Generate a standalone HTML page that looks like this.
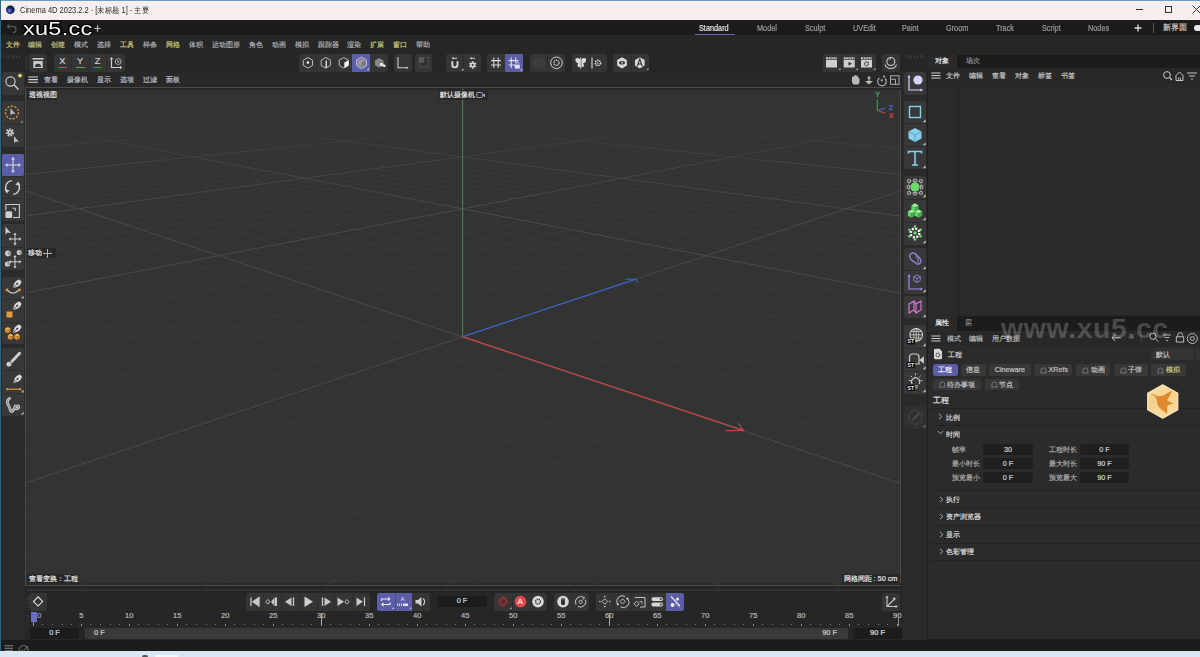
<!DOCTYPE html><html><head><meta charset="utf-8"><style>
*{margin:0;padding:0;box-sizing:border-box}
html,body{width:1200px;height:657px;overflow:hidden;background:#262626;font-family:"Liberation Sans", sans-serif}
.t{position:absolute;white-space:nowrap;line-height:1;-webkit-text-stroke:0.2px currentColor}
.a{position:absolute;overflow:visible}
</style></head><body>
<div class="a" style="left:0px;top:0px;width:1200px;height:20px;background:#f7eeee;"></div>
<div class="a" style="left:0px;top:0px;width:1200px;height:1px;background:#6f9dc6;"></div>
<div class="a" style="left:0px;top:0px;width:1px;height:657px;background:#2c6585;"></div>
<svg class="a" style="left:5px;top:4px;" width="11" height="11" viewBox="0 0 11 11"><defs><radialGradient id="c4d" cx="0.4" cy="0.6" r="0.6"><stop offset="0" stop-color="#7a86e0"/><stop offset="0.6" stop-color="#1a1f6a"/><stop offset="1" stop-color="#0b0e30"/></radialGradient></defs><circle cx="5.5" cy="5.5" r="5" fill="#e8e8f0"/><circle cx="5.3" cy="5.8" r="4.3" fill="url(#c4d)"/></svg>
<div class="t" style="left:20px;top:6.66px;font-size:8.2px;color:#2b2b2b;transform:scaleX(0.915);transform-origin:left;-webkit-text-stroke:0">Cinema 4D 2023.2.2 - [未标题 1] - 主要</div>
<div class="a" style="left:1136px;top:9px;width:7px;height:1px;background:#333;"></div>
<div class="a" style="left:1165px;top:6px;width:7px;height:7px;background:transparent;border:1px solid #333"></div>
<svg class="a" style="left:1192px;top:5px;" width="9" height="9" viewBox="0 0 9 9"><path d="M0.5 0.5L8.5 8.5M8.5 0.5L0.5 8.5" stroke="#333" stroke-width="1"/></svg>
<div class="a" style="left:1px;top:20px;width:1199px;height:15px;background:#1b1b1b;"></div>
<svg class="a" style="left:6px;top:23px;" width="11" height="9" viewBox="0 0 11 9"><path d="M2 3.5 H7 a3 3 0 0 1 0 6 " fill="none" stroke="#555" stroke-width="1.4"/><path d="M0.5 3.5 L3.5 0.8 L3.5 6.2Z" fill="#555"/></svg>
<div class="t" style="left:699px;top:24.47px;font-size:8.3px;color:#e0e0e0;transform:scaleX(0.88);transform-origin:left">Standard</div>
<div class="t" style="left:756.5px;top:24.47px;font-size:8.3px;color:#9a9a9a;transform:scaleX(0.88);transform-origin:left">Model</div>
<div class="t" style="left:804.7px;top:24.47px;font-size:8.3px;color:#9a9a9a;transform:scaleX(0.88);transform-origin:left">Sculpt</div>
<div class="t" style="left:852.6px;top:24.47px;font-size:8.3px;color:#9a9a9a;transform:scaleX(0.88);transform-origin:left">UVEdit</div>
<div class="t" style="left:902.4px;top:24.47px;font-size:8.3px;color:#9a9a9a;transform:scaleX(0.88);transform-origin:left">Paint</div>
<div class="t" style="left:946.3px;top:24.47px;font-size:8.3px;color:#9a9a9a;transform:scaleX(0.88);transform-origin:left">Groom</div>
<div class="t" style="left:996.4px;top:24.47px;font-size:8.3px;color:#9a9a9a;transform:scaleX(0.88);transform-origin:left">Track</div>
<div class="t" style="left:1041.6px;top:24.47px;font-size:8.3px;color:#9a9a9a;transform:scaleX(0.88);transform-origin:left">Script</div>
<div class="t" style="left:1087.8px;top:24.47px;font-size:8.3px;color:#9a9a9a;transform:scaleX(0.88);transform-origin:left">Nodes</div>
<div class="a" style="left:695px;top:33.6px;width:39.5px;height:2px;background:#6466b8;"></div>
<svg class="a" style="left:1134px;top:24px;" width="8" height="8" viewBox="0 0 8 8"><path d="M4 0.5V7.5M0.5 4H7.5" stroke="#ddd" stroke-width="1.3"/></svg>
<div class="a" style="left:1153px;top:23px;width:1px;height:10px;background:#555;"></div>
<div class="t" style="left:1163px;top:24.45px;font-size:7.5px;color:#d0d0d0;">新界面</div>
<div class="a" style="left:1194px;top:25px;width:10px;height:6px;background:#e8e8e8;border-radius:3px"></div>
<div class="t" style="left:22.5px;top:20.2px;font-size:18px;color:#f6f6f6;letter-spacing:0.25px;-webkit-text-stroke:0;text-shadow:1px 0 0 #000,-1px 0 0 #000,0 1px 0 #000,0 -1px 0 #000,1px 1px 0 #000,-1px -1px 0 #000,1px -1px 0 #000,-1px 1px 0 #000,0 0 2px #000;transform:scaleX(1.3);transform-origin:left">xu5.cc</div>
<svg class="a" style="left:93.5px;top:25.2px;" width="7" height="7" viewBox="0 0 7 7"><path d="M3.5 0.3V6.7M0.3 3.5H6.7" stroke="#bbb" stroke-width="1.2"/></svg>
<div class="a" style="left:1px;top:35px;width:1199px;height:17px;background:#262626;"></div>
<div class="t" style="left:5.5px;top:40.52px;font-size:7.3px;color:#c9bf6a;">文件</div>
<div class="t" style="left:28.4px;top:40.52px;font-size:7.3px;color:#b8b87a;">编辑</div>
<div class="t" style="left:51.3px;top:40.52px;font-size:7.3px;color:#b9bd78;">创建</div>
<div class="t" style="left:74.3px;top:40.52px;font-size:7.3px;color:#a8aeb8;">模式</div>
<div class="t" style="left:96.8px;top:40.52px;font-size:7.3px;color:#aeb0b4;">选择</div>
<div class="t" style="left:120px;top:40.52px;font-size:7.3px;color:#cfc575;">工具</div>
<div class="t" style="left:143px;top:40.52px;font-size:7.3px;color:#a9aaaf;">样条</div>
<div class="t" style="left:166px;top:40.52px;font-size:7.3px;color:#c9c36e;">网格</div>
<div class="t" style="left:188.8px;top:40.52px;font-size:7.3px;color:#a9aaaf;">体积</div>
<div class="t" style="left:211.8px;top:40.52px;font-size:7.3px;color:#a9aaaf;">运动图形</div>
<div class="t" style="left:249px;top:40.52px;font-size:7.3px;color:#a9aaaf;">角色</div>
<div class="t" style="left:272px;top:40.52px;font-size:7.3px;color:#a9aaaf;">动画</div>
<div class="t" style="left:295px;top:40.52px;font-size:7.3px;color:#a9aaaf;">模拟</div>
<div class="t" style="left:318px;top:40.52px;font-size:7.3px;color:#a9aaaf;">跟踪器</div>
<div class="t" style="left:347px;top:40.52px;font-size:7.3px;color:#a9aaaf;">渲染</div>
<div class="t" style="left:370px;top:40.52px;font-size:7.3px;color:#bcc46e;">扩展</div>
<div class="t" style="left:393px;top:40.52px;font-size:7.3px;color:#d2c66a;">窗口</div>
<div class="t" style="left:416px;top:40.52px;font-size:7.3px;color:#a9aaaf;">帮助</div>
<div class="a" style="left:3.0px;top:54.5px;width:1px;height:3px;background:#3d3d3d;"></div>
<div class="a" style="left:5.6px;top:54.5px;width:1px;height:3px;background:#3d3d3d;"></div>
<div class="a" style="left:8.2px;top:54.5px;width:1px;height:3px;background:#3d3d3d;"></div>
<div class="a" style="left:10.8px;top:54.5px;width:1px;height:3px;background:#3d3d3d;"></div>
<div class="a" style="left:13.4px;top:54.5px;width:1px;height:3px;background:#3d3d3d;"></div>
<div class="a" style="left:16.0px;top:54.5px;width:1px;height:3px;background:#3d3d3d;"></div>
<div class="a" style="left:18.6px;top:54.5px;width:1px;height:3px;background:#3d3d3d;"></div>
<div class="a" style="left:25px;top:57.0px;width:3px;height:1px;background:#3d3d3d;"></div>
<div class="a" style="left:25px;top:59.6px;width:3px;height:1px;background:#3d3d3d;"></div>
<div class="a" style="left:25px;top:62.2px;width:3px;height:1px;background:#3d3d3d;"></div>
<div class="a" style="left:25px;top:64.8px;width:3px;height:1px;background:#3d3d3d;"></div>
<div class="a" style="left:25px;top:67.4px;width:3px;height:1px;background:#3d3d3d;"></div>
<div class="a" style="left:29px;top:54px;width:18px;height:17.599999999999994px;background:#353535;border-radius:2.5px"></div>
<svg class="a" style="left:29px;top:54px;" width="18" height="17.6" viewBox="0 0 18 17.6"><rect x="3.5" y="4" width="11" height="1.6" fill="#c9c9c9"/><rect x="4.3" y="7" width="9.4" height="7" fill="#c9c9c9"/><path d="M6.2 12.2 a2.8 2.4 0 0 1 5.6 0Z" fill="#353535"/><rect x="6" y="11.6" width="6" height="1.3" fill="#353535"/></svg>
<div class="a" style="left:54px;top:54px;width:71px;height:17.599999999999994px;background:#353535;border-radius:2.5px"></div>
<div class="a" style="left:70.7px;top:54px;width:1px;height:17.6px;background:#2c2c2c;"></div>
<div class="a" style="left:88.7px;top:54px;width:1px;height:17.6px;background:#2c2c2c;"></div>
<div class="a" style="left:106px;top:54px;width:1px;height:17.6px;background:#2c2c2c;"></div>
<div class="t" style="left:62.3px;top:57.01px;font-size:9.2px;color:#d2d2d2;transform:translateX(-50%);">X</div>
<div class="a" style="left:57.8px;top:67px;width:9px;height:1.3px;background:#d04a4a;"></div>
<div class="t" style="left:80px;top:57.01px;font-size:9.2px;color:#d2d2d2;transform:translateX(-50%);">Y</div>
<div class="a" style="left:75.5px;top:67px;width:9px;height:1.3px;background:#4ab24a;"></div>
<div class="t" style="left:97.5px;top:57.01px;font-size:9.2px;color:#d2d2d2;transform:translateX(-50%);">Z</div>
<div class="a" style="left:93.0px;top:67px;width:9px;height:1.3px;background:#3a7bd0;"></div>
<svg class="a" style="left:110px;top:54px;" width="15" height="16" viewBox="0 0 15 16"><path d="M1.5 4.5 V13.5 H10.5" fill="none" stroke="#cfcfcf" stroke-width="1.1"/><path d="M-0.2 5.2 L1.5 3 L3.2 5.2Z M10 11.8 L12.2 13.5 L10 15.2Z" fill="#cfcfcf"/><path d="M5.5 6 l2.7 -1.55 l2.7 1.55 v3.1 l-2.7 1.55 l-2.7 -1.55z M7 6.8 l1.2 0.7 l1.2 -0.7 M8.2 7.5 v1.5" fill="none" stroke="#c8c8c8" stroke-width="0.8"/></svg>
<div class="a" style="left:299px;top:54px;width:89px;height:17.599999999999994px;background:#353535;border-radius:2.5px"></div>
<div class="a" style="left:352.3px;top:54px;width:17.8px;height:17.6px;background:#5b5ea6;"></div>
<div class="a" style="left:316.3px;top:54px;width:1px;height:17.6px;background:#2c2c2c;"></div>
<div class="a" style="left:334.3px;top:54px;width:1px;height:17.6px;background:#2c2c2c;"></div>
<svg class="a" style="left:299px;top:54px;" width="89" height="17.6" viewBox="0 0 89 17.6"><polygon points="8.90,3.50 13.49,6.15 13.49,11.45 8.90,14.10 4.31,11.45 4.31,6.15" fill="none" stroke="#c8c8c8" stroke-width="0.9"/><circle cx="8.9" cy="8.6" r="1.3" fill="#eee"/><polygon points="26.80,3.50 31.39,6.15 31.39,11.45 26.80,14.10 22.21,11.45 22.21,6.15" fill="none" stroke="#c8c8c8" stroke-width="0.9"/><path d="M27.2 6.5V14" stroke="#eee" stroke-width="1.3"/><polygon points="44.80,3.50 49.39,6.15 49.39,11.45 44.80,14.10 40.21,11.45 40.21,6.15" fill="none" stroke="#c8c8c8" stroke-width="0.9"/><path d="M45.3 8.4 L49.6 6.2 L49.6 11.4 L45.3 13.9Z" fill="#f0f0f0"/><polygon points="62.50,3.20 67.35,6.00 67.35,11.60 62.50,14.40 57.65,11.60 57.65,6.00" fill="none" stroke="#e0e0e0" stroke-width="0.9"/><polygon points="62.50,4.60 66.14,6.70 66.14,10.90 62.50,13.00 58.86,10.90 58.86,6.70" fill="#9a9a9a"/><path d="M62.5 8.8 L66.1 6.7 L66.1 10.9 L62.5 13Z" fill="#777"/><path d="M67.8 16 L70 16 L70 13.8Z" fill="#bbb"/><polygon points="80.20,4.00 84.36,6.40 84.36,11.20 80.20,13.60 76.04,11.20 76.04,6.40" fill="#8a8a8a"/><path d="M80.5 9 L85 6.6 V11 L80.5 13.6Z" fill="#6a6a6a"/><circle cx="82.6" cy="10.6" r="1.8" fill="#eee"/><circle cx="85.2" cy="11.8" r="1.4" fill="#eee"/></svg>
<div class="a" style="left:394.3px;top:54px;width:17.69999999999999px;height:17.599999999999994px;background:#353535;border-radius:2.5px"></div>
<svg class="a" style="left:394.3px;top:54px;" width="18" height="17.6" viewBox="0 0 18 17.6"><path d="M4 3 V13.8 H14" fill="none" stroke="#cfcfcf" stroke-width="1.1"/><path d="M12.5 12.5 L14.5 13.8 L12.5 15" fill="#cfcfcf"/></svg>
<div class="a" style="left:415px;top:54px;width:17.30000000000001px;height:17.599999999999994px;background:#353535;border-radius:2.5px"></div>
<svg class="a" style="left:415px;top:54px;" width="17.3" height="17.6" viewBox="0 0 17.3 17.6"><rect x="4" y="3.5" width="9.5" height="9.5" fill="none" stroke="#505050" stroke-width="0.9"/><rect x="4" y="3.5" width="5" height="5" fill="#5a5a5a"/></svg>
<div class="a" style="left:445.5px;top:54px;width:35.19999999999999px;height:17.599999999999994px;background:#353535;border-radius:2.5px"></div>
<div class="a" style="left:463px;top:54px;width:1px;height:17.6px;background:#2c2c2c;"></div>
<svg class="a" style="left:445.5px;top:54px;" width="35.2" height="17.6" viewBox="0 0 35.2 17.6"><path d="M6.3 7.2 V10.8 a2.6 2.6 0 0 0 5.2 0 V7.2" fill="none" stroke="#d8d8d8" stroke-width="1.9"/><path d="M6.5 4.3 H11.2" stroke="#d8d8d8" stroke-width="0.9"/><path d="M5.6 4.3 L7.6 3 V5.6Z" fill="#d8d8d8"/><path d="M15.2 16.5 L17.5 16.5 L17.5 14.2Z" fill="#bbb"/><path d="M24.5 4.3 H29.2" stroke="#d8d8d8" stroke-width="0.9"/><path d="M23.6 4.3 L25.6 3 V5.6Z" fill="#d8d8d8"/><circle cx="26.7" cy="11" r="2.4" fill="#d8d8d8"/><rect x="25.80" y="7.30" width="1.8" height="2" fill="#d8d8d8" transform="rotate(0 26.7 11)"/><rect x="25.80" y="7.30" width="1.8" height="2" fill="#d8d8d8" transform="rotate(60 26.7 11)"/><rect x="25.80" y="7.30" width="1.8" height="2" fill="#d8d8d8" transform="rotate(120 26.7 11)"/><rect x="25.80" y="7.30" width="1.8" height="2" fill="#d8d8d8" transform="rotate(180 26.7 11)"/><rect x="25.80" y="7.30" width="1.8" height="2" fill="#d8d8d8" transform="rotate(240 26.7 11)"/><rect x="25.80" y="7.30" width="1.8" height="2" fill="#d8d8d8" transform="rotate(300 26.7 11)"/><circle cx="26.7" cy="11" r="1.01" fill="#353535"/></svg>
<div class="a" style="left:487.3px;top:54px;width:35.19999999999999px;height:17.599999999999994px;background:#353535;border-radius:2.5px"></div>
<div class="a" style="left:505px;top:54px;width:17.5px;height:17.6px;background:#5b5ea6;"></div>
<svg class="a" style="left:487.3px;top:54px;" width="35.2" height="17.6" viewBox="0 0 35.2 17.6"><path d="M4 6.6 H14 M4 11 H14 M6.8 3.6 V14 M11.2 3.6 V14" stroke="#d8d8d8" stroke-width="1.1"/><path d="M21.5 6.6 H31.5 M21.5 11 H28 M24.3 3.6 V14 M28.7 3.6 V8.5" stroke="#e0e0e8" stroke-width="1.1"/><rect x="27.8" y="10.8" width="5" height="3.8" fill="#e0e0e8"/><path d="M28.9 10.8 V9.6 a1.4 1.4 0 0 1 2.8 0 V10.8" fill="none" stroke="#e0e0e8" stroke-width="0.8"/><path d="M33 16.5 L35.2 16.5 L35.2 14.3Z" fill="#ccc"/></svg>
<div class="a" style="left:529.5px;top:54px;width:35.5px;height:17.599999999999994px;background:#353535;border-radius:2.5px"></div>
<div class="a" style="left:547px;top:54px;width:1px;height:17.6px;background:#2c2c2c;"></div>
<svg class="a" style="left:529.5px;top:54px;" width="35.5" height="17.6" viewBox="0 0 35.5 17.6"><circle cx="8.8" cy="8.8" r="5.5" fill="none" stroke="#4a4a4a" stroke-width="0.8"/><circle cx="8.8" cy="8.8" r="3.6" fill="none" stroke="#4a4a4a" stroke-width="0.8"/><circle cx="8.8" cy="8.8" r="1.6" fill="none" stroke="#4a4a4a" stroke-width="0.8"/><circle cx="26.5" cy="8.8" r="5.8" fill="none" stroke="#cfcfcf" stroke-width="1"/><circle cx="26.5" cy="8.8" r="2.6" fill="none" stroke="#cfcfcf" stroke-width="1.3" stroke-dasharray="1.2 0.7"/></svg>
<div class="a" style="left:571.6px;top:54px;width:35.19999999999993px;height:17.599999999999994px;background:#353535;border-radius:2.5px"></div>
<div class="a" style="left:589px;top:54px;width:1px;height:17.6px;background:#2c2c2c;"></div>
<svg class="a" style="left:571.6px;top:54px;" width="35.2" height="17.6" viewBox="0 0 35.2 17.6"><path d="M8.7 3.5 V14.5" stroke="#ddd" stroke-width="1"/><path d="M8 5 C5 3 3 4 3.5 7 C4 9 6 9 6.5 9.5 C5 11 5 13 8 13Z" fill="#ddd"/><path d="M9.5 5 C12.5 3 14.5 4 14 7 C13.5 9 11.5 9 11 9.5 C12.5 11 12.5 13 9.5 13Z" fill="#ddd"/><path d="M20 3.5 V14.5" stroke="#ddd" stroke-width="1.1"/><circle cx="26" cy="9" r="2.6" fill="none" stroke="#ddd" stroke-width="1.6" stroke-dasharray="1.4 0.8"/><circle cx="26" cy="9" r="0.8" fill="#ddd"/></svg>
<div class="a" style="left:613.3px;top:54px;width:35.700000000000045px;height:17.599999999999994px;background:#353535;border-radius:2.5px"></div>
<div class="a" style="left:631px;top:54px;width:1px;height:17.6px;background:#2c2c2c;"></div>
<svg class="a" style="left:613.3px;top:54px;" width="35.7" height="17.6" viewBox="0 0 35.7 17.6"><polygon points="9.00,3.20 13.85,6.00 13.85,11.60 9.00,14.40 4.15,11.60 4.15,6.00" fill="#d8d8d8"/><ellipse cx="9" cy="8.8" rx="3" ry="1.8" fill="#333"/><circle cx="9" cy="8.8" r="0.9" fill="#d8d8d8"/><polygon points="26.80,3.20 31.65,6.00 31.65,11.60 26.80,14.40 21.95,11.60 21.95,6.00" fill="#d8d8d8"/><path d="M24.3 12.3 L26.8 5 L29.3 12.3 M25.2 10 H28.4" fill="none" stroke="#333" stroke-width="1.1"/><path d="M33.5 16 L35.5 16 L35.5 14Z" fill="#bbb"/></svg>
<div class="a" style="left:823px;top:54px;width:53px;height:17.599999999999994px;background:#353535;border-radius:2.5px"></div>
<div class="a" style="left:840.7px;top:54px;width:1px;height:17.6px;background:#2c2c2c;"></div>
<div class="a" style="left:858px;top:54px;width:1px;height:17.6px;background:#2c2c2c;"></div>
<svg class="a" style="left:823px;top:54px;" width="53" height="17.6" viewBox="0 0 53 17.6"><rect x="3" y="6" width="11" height="7.5" fill="#cfcfcf"/><path d="M3 5.3 h11 v-2 h-11z" fill="#cfcfcf"/><path d="M5 3.3 l1 2 M7.5 3.3 l1 2 M10 3.3 l1 2 M12.5 3.3 l1 2" stroke="#353535" stroke-width="0.8"/><path d="M15.5 16 L17.5 16 L17.5 14Z" fill="#bbb"/><rect x="20.7" y="6" width="11" height="7.5" fill="#cfcfcf"/><path d="M20.7 5.3 h11 v-2 h-11z" fill="#cfcfcf"/><path d="M22.7 3.3 l1 2 M25.2 3.3 l1 2 M27.7 3.3 l1 2 M30.2 3.3 l1 2" stroke="#353535" stroke-width="0.8"/><path d="M25.5 7.8 L29 9.8 L25.5 11.8Z" fill="#353535"/><path d="M33 16 L35 16 L35 14Z" fill="#bbb"/><rect x="38" y="6" width="11" height="7.5" fill="#cfcfcf"/><path d="M38 5.3 h11 v-2 h-11z" fill="#cfcfcf"/><path d="M40 3.3 l1 2 M42.5 3.3 l1 2 M45 3.3 l1 2 M47.5 3.3 l1 2" stroke="#353535" stroke-width="0.8"/><circle cx="43.5" cy="9.8" r="1.9" fill="none" stroke="#353535" stroke-width="1.3" stroke-dasharray="1.2 0.6"/><path d="M50.5 16 L52.5 16 L52.5 14Z" fill="#bbb"/></svg>
<div class="a" style="left:882.4px;top:54px;width:17.600000000000023px;height:17.599999999999994px;background:#353535;border-radius:2.5px"></div>
<svg class="a" style="left:882.4px;top:54px;" width="17.6" height="17.6" viewBox="0 0 17.6 17.6"><circle cx="8.8" cy="7.5" r="4" fill="none" stroke="#cfcfcf" stroke-width="1.1"/><path d="M7 6 a2 2 0 0 1 2 -1.5" fill="none" stroke="#cfcfcf" stroke-width="0.8"/><path d="M3.3 10.5 a5.5 4 0 0 0 11 0" fill="none" stroke="#cfcfcf" stroke-width="1.1"/></svg>
<div class="a" style="left:906.0px;top:55px;width:1px;height:2.5px;background:#3d3d3d;"></div>
<div class="a" style="left:908.7px;top:55px;width:1px;height:2.5px;background:#3d3d3d;"></div>
<div class="a" style="left:911.4px;top:55px;width:1px;height:2.5px;background:#3d3d3d;"></div>
<div class="a" style="left:914.1px;top:55px;width:1px;height:2.5px;background:#3d3d3d;"></div>
<div class="a" style="left:916.8px;top:55px;width:1px;height:2.5px;background:#3d3d3d;"></div>
<div class="a" style="left:919.5px;top:55px;width:1px;height:2.5px;background:#3d3d3d;"></div>
<div class="a" style="left:922.2px;top:55px;width:1px;height:2.5px;background:#3d3d3d;"></div>
<div class="a" style="left:1px;top:72px;width:23.5px;height:568px;background:#2a2a2a;"></div>
<div class="a" style="left:1.5px;top:72px;width:22px;height:23px;background:#383838;border-radius:2.5px"></div>
<div class="a" style="left:1.5px;top:101px;width:22px;height:45.80000000000001px;background:#383838;border-radius:2.5px"></div>
<div class="a" style="left:1.5px;top:154px;width:22px;height:67px;background:#383838;border-radius:2.5px"></div>
<div class="a" style="left:1.5px;top:154.0px;width:22px;height:22.333333333333332px;background:#5b5ea6;border-radius:2px"></div>
<div class="a" style="left:1.5px;top:224.2px;width:22px;height:45.80000000000001px;background:#383838;border-radius:2.5px"></div>
<div class="a" style="left:1.5px;top:276.7px;width:22px;height:67.80000000000001px;background:#383838;border-radius:2.5px"></div>
<div class="a" style="left:1.5px;top:348px;width:22px;height:68px;background:#383838;border-radius:2.5px"></div>
<div class="a" style="left:1.5px;top:123.5px;width:22px;height:1px;background:#2e2e2e;"></div>
<div class="a" style="left:1.5px;top:175.5px;width:22px;height:1px;background:#2e2e2e;"></div>
<div class="a" style="left:1.5px;top:198.0px;width:22px;height:1px;background:#2e2e2e;"></div>
<div class="a" style="left:1.5px;top:246.5px;width:22px;height:1px;background:#2e2e2e;"></div>
<div class="a" style="left:1.5px;top:298.8px;width:22px;height:1px;background:#2e2e2e;"></div>
<div class="a" style="left:1.5px;top:321.5px;width:22px;height:1px;background:#2e2e2e;"></div>
<div class="a" style="left:1.5px;top:370.1px;width:22px;height:1px;background:#2e2e2e;"></div>
<div class="a" style="left:1.5px;top:392.7px;width:22px;height:1px;background:#2e2e2e;"></div>
<svg class="a" style="left:1.5px;top:72px;" width="22" height="23" viewBox="0 0 22 23"><circle cx="8.5" cy="9.5" r="4.6" fill="none" stroke="#cfcfcf" stroke-width="1.1"/><path d="M11.8 12.8 L16.5 17.5" stroke="#cfcfcf" stroke-width="1.4"/><circle cx="18" cy="3.6" r="1.9" fill="#d9d872"/></svg>
<svg class="a" style="left:1.5px;top:101px;" width="22" height="23" viewBox="0 0 22 23"><circle cx="10" cy="11.5" r="6.5" fill="none" stroke="#e09a3a" stroke-width="1.3" stroke-dasharray="2.1 1.5"/><path d="M8.5 7 L8.5 14.5 L10.3 12.7 L13.5 13Z" fill="#bdbdbd"/><path d="M18.5 21.5 L20.5 21.5 L20.5 19.5Z" fill="#bbb"/></svg>
<svg class="a" style="left:1.5px;top:124px;" width="22" height="23" viewBox="0 0 22 23"><circle cx="8" cy="8.5" r="2.9" fill="none" stroke="#cfcfcf" stroke-width="2.4" stroke-dasharray="1.6 0.9"/><circle cx="8" cy="8.5" r="2.3" fill="#cfcfcf"/><circle cx="8" cy="8.5" r="0.9" fill="#383838"/><path d="M12 12 L12 19 L13.8 17.5 L17 18Z" fill="#bdbdbd"/></svg>
<svg class="a" style="left:1.5px;top:154px;" width="22" height="21.4" viewBox="0 0 22 21.4"><path d="M11 4.5 V17.5 M4.5 11 H17.5" stroke="#d8d8e8" stroke-width="1.1"/><path d="M11 3 L9 5.5 H13Z M11 19 L9 16.5 H13Z M3 11 L5.5 9 V13Z M19 11 L16.5 9 V13Z" fill="#d8d8e8"/></svg>
<svg class="a" style="left:1.5px;top:176px;" width="22" height="22" viewBox="0 0 22 22"><path d="M9.8 4.6 A7 7 0 0 0 4.6 15.2" fill="none" stroke="#cfcfcf" stroke-width="1.3"/><path d="M11.2 18.4 A7 7 0 0 0 16.4 7.8" fill="none" stroke="#cfcfcf" stroke-width="1.3"/><path d="M2.5 13.2 L4.8 17.6 L7.6 14.2Z" fill="#cfcfcf"/><path d="M18.5 9.8 L16.2 5.4 L13.4 8.8Z" fill="#cfcfcf"/></svg>
<svg class="a" style="left:1.5px;top:198.5px;" width="22" height="22.5" viewBox="0 0 22 22.5"><path d="M3.9 11.5 V5.5 H17.4 V18.5 H11" fill="none" stroke="#cfcfcf" stroke-width="1.1"/><path d="M10.5 9.2 H13.3 V12" fill="none" stroke="#cfcfcf" stroke-width="1"/><rect x="3.4" y="12.2" width="6.8" height="6.8" rx="1.5" fill="#cfcfcf"/></svg>
<svg class="a" style="left:1.5px;top:224.2px;" width="22" height="23" viewBox="0 0 22 23"><path d="M3.5 2.8 V10.5 L5.5 8.6 L9 9.3Z" fill="#cfcfcf"/><path d="M13 10 V20 M8 15 H18" stroke="#cfcfcf" stroke-width="1"/><path d="M13 8.6 L11.3 10.8 H14.7Z M13 21.4 L11.3 19.2 H14.7Z M6.6 15 L8.8 13.3 V16.7Z M19.4 15 L17.2 13.3 V16.7Z" fill="#cfcfcf"/></svg>
<svg class="a" style="left:1.5px;top:247px;" width="22" height="23" viewBox="0 0 22 23"><circle cx="6" cy="6.5" r="2.9" fill="#cfcfcf"/><circle cx="7.30" cy="6.21" r="1.80" fill="#9a9a9a"/><circle cx="17.2" cy="5.6" r="2.5" fill="#cfcfcf"/><circle cx="18.32" cy="5.35" r="1.55" fill="#9a9a9a"/><circle cx="5.5" cy="17" r="2.6" fill="#cfcfcf"/><circle cx="6.67" cy="16.74" r="1.61" fill="#9a9a9a"/><path d="M13 9.5 V20 M8 14.8 H18" stroke="#cfcfcf" stroke-width="1"/><path d="M13 8.1 L11.3 10.3 H14.7Z M13 21.4 L11.3 19.2 H14.7Z M6.6 14.8 L8.8 13.1 V16.5Z M19.4 14.8 L17.2 13.1 V16.5Z" fill="#cfcfcf"/></svg>
<svg class="a" style="left:1.5px;top:276.7px;" width="22" height="22.6" viewBox="0 0 22 22.6"><g transform="translate(10.5 2.2) scale(0.9)"><path d="M0.3 10 L1.8 5 C2.8 2.6 5 1 7.8 0.4 L10 2.6 C9.4 5.4 7.8 7.4 5.2 8.4Z" fill="#d8d8d8"/><path d="M0.3 10 L4.6 5.7" stroke="#383838" stroke-width="0.9"/><circle cx="5.2" cy="5.1" r="1.1" fill="#383838"/></g><path d="M5 13 Q11 19 17 13" fill="none" stroke="#ccc" stroke-width="1.2"/><circle cx="5" cy="13" r="1.4" fill="#e09a3a"/><circle cx="17.5" cy="13" r="1.4" fill="#e09a3a"/><path d="M18.8 21.5 L21.6 21.5 L21.6 18.7Z" fill="#bbb"/></svg>
<svg class="a" style="left:1.5px;top:299.3px;" width="22" height="22.6" viewBox="0 0 22 22.6"><g transform="translate(10.5 2.2) scale(0.9)"><path d="M0.3 10 L1.8 5 C2.8 2.6 5 1 7.8 0.4 L10 2.6 C9.4 5.4 7.8 7.4 5.2 8.4Z" fill="#d8d8d8"/><path d="M0.3 10 L4.6 5.7" stroke="#383838" stroke-width="0.9"/><circle cx="5.2" cy="5.1" r="1.1" fill="#383838"/></g><rect x="4.5" y="12.5" width="6" height="6" fill="#e09a3a"/></svg>
<svg class="a" style="left:1.5px;top:322px;" width="22" height="22.5" viewBox="0 0 22 22.5"><g transform="translate(10.5 2.2) scale(0.9)"><path d="M0.3 10 L1.8 5 C2.8 2.6 5 1 7.8 0.4 L10 2.6 C9.4 5.4 7.8 7.4 5.2 8.4Z" fill="#d8d8d8"/><path d="M0.3 10 L4.6 5.7" stroke="#383838" stroke-width="0.9"/><circle cx="5.2" cy="5.1" r="1.1" fill="#383838"/></g><path d="M5.8 4.95 L8.6 6.58 L5.8 8.2 L3.0 6.58Z" fill="#f2b25a"/><path d="M3.0 6.58 L5.8 8.2 L5.8 11.45 L3.0 9.82Z" fill="#e39a38"/><path d="M8.6 6.58 L5.8 8.2 L5.8 11.45 L8.6 9.82Z" fill="#c77f25"/><path d="M8.6 11.55 L11.399999999999999 13.18 L8.6 14.8 L5.8 13.18Z" fill="#f2b25a"/><path d="M5.8 13.18 L8.6 14.8 L8.6 18.05 L5.8 16.42Z" fill="#e39a38"/><path d="M11.399999999999999 13.18 L8.6 14.8 L8.6 18.05 L11.399999999999999 16.42Z" fill="#c77f25"/><path d="M15.2 11.55 L18.0 13.18 L15.2 14.8 L12.399999999999999 13.18Z" fill="#f2b25a"/><path d="M12.399999999999999 13.18 L15.2 14.8 L15.2 18.05 L12.399999999999999 16.42Z" fill="#e39a38"/><path d="M18.0 13.18 L15.2 14.8 L15.2 18.05 L18.0 16.42Z" fill="#c77f25"/></svg>
<svg class="a" style="left:1.5px;top:348px;" width="22" height="22.6" viewBox="0 0 22 22.6"><path d="M9.8 13.6 L17.6 5.2" stroke="#cfcfcf" stroke-width="2.9" stroke-linecap="round"/><circle cx="6.9" cy="16.2" r="2.5" fill="#cfcfcf"/><path d="M8.3 14.8 L9.6 13.4" stroke="#383838" stroke-width="0.6"/></svg>
<svg class="a" style="left:1.5px;top:370.6px;" width="22" height="22.6" viewBox="0 0 22 22.6"><g transform="translate(11.0 3.2) scale(0.9)"><path d="M0.3 10 L1.8 5 C2.8 2.6 5 1 7.8 0.4 L10 2.6 C9.4 5.4 7.8 7.4 5.2 8.4Z" fill="#d8d8d8"/><path d="M0.3 10 L4.6 5.7" stroke="#383838" stroke-width="0.9"/><circle cx="5.2" cy="5.1" r="1.1" fill="#383838"/></g><path d="M5 18.2 H18.5" stroke="#e09a3a" stroke-width="1.2"/><rect x="4.3" y="17.2" width="1.6" height="2" fill="#e09a3a"/><rect x="17.6" y="17.2" width="1.6" height="2" fill="#e09a3a"/><path d="M18.8 21.5 L21.6 21.5 L21.6 18.7Z" fill="#bbb"/></svg>
<svg class="a" style="left:1.5px;top:393.2px;" width="22" height="22.8" viewBox="0 0 22 22.8"><path d="M7.5 5.5 C5 7 4.5 10 6.5 12.5 C7.5 14 8 16 8.5 17.5 C9 19 11 18.5 11.5 17 C12 15 13 13.5 15 13 C17 12.5 17.5 14.5 15.5 15.5 C13.5 16.5 12.5 15 13 13" fill="none" stroke="#cfcfcf" stroke-width="2.8" stroke-linecap="round" stroke-linejoin="round"/><path d="M7.5 5.5 C5 7 4.5 10 6.5 12.5 C7.5 14 8 16 8.5 17.5 C9 19 11 18.5 11.5 17 C12 15 13 13.5 15 13 C17 12.5 17.5 14.5 15.5 15.5 C13.5 16.5 12.5 15 13 13" fill="none" stroke="#5a5a5a" stroke-width="0.7" stroke-linecap="round"/><path d="M18.8 21.5 L21.6 21.5 L21.6 18.7Z" fill="#bbb"/></svg>
<div class="a" style="left:24.5px;top:72px;width:877px;height:15.5px;background:#282828;"></div>
<svg class="a" style="left:28px;top:76.3px;" width="11" height="7" viewBox="0 0 11 7"><path d="M0.3 1 H10 M0.3 3.6 H10 M0.3 6.2 H10" stroke="#d8d8d8" stroke-width="1.1"/></svg>
<div class="t" style="left:44px;top:76.21px;font-size:7.2px;color:#b8bcc2;">查看</div>
<div class="t" style="left:67px;top:76.21px;font-size:7.2px;color:#b8bcc2;">摄像机</div>
<div class="t" style="left:97px;top:76.21px;font-size:7.2px;color:#b8bcc2;">显示</div>
<div class="t" style="left:120px;top:76.21px;font-size:7.2px;color:#b8bcc2;">选项</div>
<div class="t" style="left:143px;top:76.21px;font-size:7.2px;color:#b8bcc2;">过滤</div>
<div class="t" style="left:166px;top:76.21px;font-size:7.2px;color:#b8bcc2;">面板</div>
<svg class="a" style="left:850px;top:74px;" width="50" height="12" viewBox="0 0 50 12"><path d="M3.5 10.5 C2 9 1.6 7 2 5.5 V3.5 a0.75 0.75 0 0 1 1.5 0 V5.5 V2.3 a0.75 0.75 0 0 1 1.5 0 V5.5 V1.8 a0.75 0.75 0 0 1 1.5 0 V5.5 V2.5 a0.75 0.75 0 0 1 1.5 0 V5.5 V4.5 a0.75 0.75 0 0 1 1.5 0 V7.5 C9.5 9.5 8.5 10.6 7 10.6 Z" fill="#b8b8b8"/><path d="M19 2.8 V7.5" stroke="#b8b8b8" stroke-width="1.3"/><path d="M17 4.5 L19 2 L21 4.5Z" fill="#b8b8b8"/><path d="M15 7 H23 L19 10.5Z" fill="#b8b8b8"/><path d="M29.5 4 A4.3 4.3 0 1 0 34.8 4.3" fill="none" stroke="#b8b8b8" stroke-width="1.1"/><circle cx="31.8" cy="6.3" r="1.1" fill="#b8b8b8"/><circle cx="34" cy="2.6" r="1" fill="#b8b8b8"/><rect x="40.5" y="1.8" width="8.5" height="8.5" fill="none" stroke="#b8b8b8" stroke-width="0.9"/><path d="M40.5 5.2 H45.5 V10.3" fill="none" stroke="#b8b8b8" stroke-width="0.9"/></svg>
<div class="a" style="left:25px;top:87px;width:876px;height:499px;background:#4a4a4a;"></div>
<div class="a" style="left:26px;top:88px;width:874px;height:497px;background:#333333;"></div>
<div class="a" style="left:26px;top:88px;width:874.5px;height:2.3px;background:#272727;"></div>
<div class="a" style="left:26px;top:582.6px;width:874.5px;height:2.4px;background:#2a2a2a;"></div>
<svg class="a" style="left:26px;top:88.3px;overflow:hidden" width="874" height="497" viewBox="0 0 874 497"><defs><linearGradient id="fmi" x1="0" y1="0" x2="0" y2="1" gradientUnits="objectBoundingBox"><stop offset="0" stop-color="#000"/><stop offset="0.055" stop-color="#000"/><stop offset="0.11" stop-color="#666"/><stop offset="0.2" stop-color="#ddd"/><stop offset="0.3" stop-color="#fff"/><stop offset="1" stop-color="#fff"/></linearGradient><linearGradient id="fma" x1="0" y1="0" x2="0" y2="1" gradientUnits="objectBoundingBox"><stop offset="0" stop-color="#000"/><stop offset="0.055" stop-color="#000"/><stop offset="0.085" stop-color="#333"/><stop offset="0.15" stop-color="#bbb"/><stop offset="0.25" stop-color="#fff"/><stop offset="1" stop-color="#fff"/></linearGradient><mask id="mmi"><rect x="0" y="0" width="874" height="497" fill="url(#fmi)"/></mask><mask id="mma"><rect x="0" y="0" width="874" height="497" fill="url(#fma)"/></mask><clipPath id="vclip"><rect x="0" y="0" width="874" height="497"/></clipPath></defs><g clip-path="url(#vclip)"><path mask="url(#mmi)" d="M-5293.3 237.3L-45953.8 2688.0M-5729.2 259.4L441.2 -13.6M-5066.8 227.4L-45350.6 2688.0M-5937.4 271.8L445.6 -13.5M-4855.3 218.1L-44747.5 2688.0M-6162.7 285.2L450.1 -13.3M-4657.3 209.4L-44144.3 2688.0M-6407.3 299.7L454.6 -13.1M-4471.6 201.3L-43541.1 2688.0M-6674.0 315.6L459.2 -12.9M-4297.0 193.6L-42938.0 2688.0M-6965.7 333.0L463.8 -12.7M-4132.6 186.4L-42334.8 2688.0M-7286.2 352.0L468.5 -12.5M-3977.5 179.6L-41731.7 2688.0M-7639.9 373.1L473.2 -12.2M-3831.0 173.2L-41128.5 2688.0M-8032.3 396.4L477.9 -12.0M-3560.8 161.4L-39922.2 2688.0M-8961.9 451.7L487.6 -11.6M-3436.1 155.9L-39319.0 2688.0M-9518.0 484.8L492.5 -11.4M-3317.5 150.7L-38715.9 2688.0M-10151.9 522.5L497.4 -11.2M-3204.7 145.7L-38112.7 2688.0M-10881.4 565.9L502.4 -11.0M-3097.2 141.0L-37509.5 2688.0M-11729.8 616.3L507.5 -10.7M-2994.6 136.5L-36906.4 2688.0M-12728.6 675.8L512.6 -10.5M-2896.7 132.2L-36303.2 2688.0M-13921.9 746.7L517.7 -10.3M-2803.1 128.1L-35700.1 2688.0M-15372.5 833.0L523.0 -10.1M-2713.6 124.2L-35096.9 2688.0M-17173.7 940.2L528.2 -9.8M-2545.7 116.9L-33890.6 2688.0M-22498.5 1256.9L538.9 -9.4M-2466.8 113.4L-33287.4 2688.0M-26675.1 1505.4L544.4 -9.1M-2391.1 110.1L-32684.3 2688.0M-32805.9 1870.1L549.9 -8.9M-2318.3 106.9L-32081.1 2688.0M-42681.1 2457.5L555.4 -8.6M-2248.3 103.8L-31477.9 2688.0M-46119.4 2688.0L561.1 -8.4M-2180.9 100.9L-30874.8 2688.0M-45515.6 2688.0L566.7 -8.1M-2116.0 98.0L-30271.6 2688.0M-44911.8 2688.0L572.5 -7.9M-2053.5 95.3L-29668.4 2688.0M-44307.9 2688.0L578.3 -7.6M-1993.2 92.7L-29065.3 2688.0M-43704.1 2688.0L584.2 -7.4M-1878.7 87.6L-27859.0 2688.0M-42496.5 2688.0L596.1 -6.9M-1824.4 85.3L-27255.8 2688.0M-41892.6 2688.0L602.2 -6.6M-1771.9 83.0L-26652.6 2688.0M-41288.8 2688.0L608.4 -6.3M-1721.1 80.7L-26049.5 2688.0M-40685.0 2688.0L614.6 -6.0M-1671.9 78.6L-25446.3 2688.0M-40081.2 2688.0L620.9 -5.8M-1624.3 76.5L-24843.2 2688.0M-39477.3 2688.0L627.2 -5.5M-1578.1 74.5L-24240.0 2688.0M-38873.5 2688.0L633.7 -5.2M-1533.4 72.5L-23636.8 2688.0M-38269.7 2688.0L640.2 -4.9M-1490.0 70.6L-23033.7 2688.0M-37665.9 2688.0L646.8 -4.6M-1407.1 67.0L-21827.4 2688.0M-36458.2 2688.0L660.2 -4.0M-1367.4 65.2L-21224.2 2688.0M-35854.4 2688.0L667.0 -3.7M-1328.8 63.5L-20621.0 2688.0M-35250.6 2688.0L674.0 -3.4M-1291.4 61.9L-20017.9 2688.0M-34646.7 2688.0L681.0 -3.1M-1254.9 60.3L-19414.7 2688.0M-34042.9 2688.0L688.1 -2.8M-1219.5 58.7L-18811.6 2688.0M-33439.1 2688.0L695.2 -2.5M-1185.0 57.2L-18208.4 2688.0M-32835.3 2688.0L702.5 -2.2M-1151.4 55.8L-17605.2 2688.0M-32231.4 2688.0L709.9 -1.9M-1118.8 54.3L-17002.1 2688.0M-31627.6 2688.0L717.3 -1.5M-1055.9 51.6L-15795.8 2688.0M-30420.0 2688.0L732.5 -0.9M-1025.6 50.2L-15192.6 2688.0M-29816.1 2688.0L740.3 -0.5M-996.1 49.0L-14589.4 2688.0M-29212.3 2688.0L748.1 -0.2M-967.4 47.7L-13986.3 2688.0M-28608.5 2688.0L756.0 0.2M-939.3 46.5L-13383.1 2688.0M-28004.7 2688.0L764.1 0.5M-911.9 45.3L-12780.0 2688.0M-27400.8 2688.0L772.2 0.9M-885.2 44.1L-12176.8 2688.0M-26797.0 2688.0L780.5 1.2M-859.0 42.9L-11573.6 2688.0M-26193.2 2688.0L788.9 1.6M-833.5 41.8L-10970.5 2688.0M-25589.4 2688.0L797.4 2.0M-784.2 39.7L-9764.2 2688.0M-24381.7 2688.0L814.7 2.7M-760.4 38.6L-9161.0 2688.0M-23777.9 2688.0L823.5 3.1M-737.1 37.6L-8557.8 2688.0M-23174.1 2688.0L832.5 3.5M-714.3 36.6L-7954.7 2688.0M-22570.3 2688.0L841.6 3.9M-692.1 35.6L-7351.5 2688.0M-21966.4 2688.0L850.8 4.3M-670.2 34.7L-6748.4 2688.0M-21362.6 2688.0L860.2 4.7M-648.9 33.7L-6145.2 2688.0M-20758.8 2688.0L869.7 5.2M-628.0 32.8L-5542.0 2688.0M-20155.0 2688.0L879.3 5.6M-607.5 31.9L-4938.9 2688.0M-19551.1 2688.0L889.0 6.0M-567.9 30.2L-3732.5 2688.0M-18343.5 2688.0L909.0 6.9M-548.6 29.3L-3129.4 2688.0M-17739.7 2688.0L919.2 7.3M-529.8 28.5L-2526.2 2688.0M-17135.8 2688.0L929.5 7.8M-511.3 27.7L-1923.1 2688.0M-16532.0 2688.0L940.0 8.2M-493.1 26.9L-1319.9 2688.0M-15928.2 2688.0L950.7 8.7M-475.4 26.1L-716.7 2688.0M-15324.4 2688.0L961.5 9.2M-457.9 25.4L-113.6 2688.0M-14720.5 2688.0L972.5 9.7M-440.8 24.6L489.6 2688.0M-14116.7 2688.0L983.7 10.2M-424.1 23.9L1092.7 2688.0M-13512.9 2688.0L995.0 10.7M-391.4 22.5L2299.1 2688.0M-12305.2 2688.0L1018.2 11.7M-375.6 21.8L2902.2 2688.0M-11701.4 2688.0L1030.1 12.2M-360.0 21.1L3505.4 2688.0M-11097.6 2688.0L1042.2 12.7M-344.7 20.4L4108.5 2688.0M-10493.8 2688.0L1054.4 13.3M-329.7 19.7L4711.7 2688.0M-9889.9 2688.0L1066.9 13.8M-314.9 19.1L5314.9 2688.0M-9286.1 2688.0L1079.6 14.4M-300.4 18.5L5918.0 2688.0M-8682.3 2688.0L1092.5 14.9M-286.1 17.8L6521.2 2688.0M-8078.5 2688.0L1105.6 15.5M-272.1 17.2L7124.3 2688.0M-7474.6 2688.0L1118.9 16.1M-244.8 16.0L8330.7 2688.0M-6267.0 2688.0L1146.3 17.3M-231.5 15.4L8933.8 2688.0M-5663.2 2688.0L1160.3 17.9M-218.4 14.9L9537.0 2688.0M-5059.3 2688.0L1174.6 18.5M-205.6 14.3L10140.1 2688.0M-4455.5 2688.0L1189.1 19.2M-192.9 13.8L10743.3 2688.0M-3851.7 2688.0L1203.9 19.8M-180.5 13.2L11346.5 2688.0M-3247.9 2688.0L1218.9 20.5M-168.2 12.7L11949.6 2688.0M-2644.0 2688.0L1234.3 21.1M-156.1 12.1L12552.8 2688.0M-2040.2 2688.0L1249.9 21.8M-144.3 11.6L13155.9 2688.0M-1436.4 2688.0L1265.8 22.5M-121.1 10.6L14362.3 2688.0M-228.8 2688.0L1298.4 24.0M-109.8 10.1L14965.4 2688.0M375.1 2688.0L1315.3 24.7M-98.6 9.6L15568.6 2688.0M978.9 2688.0L1332.4 25.5M-87.6 9.1L16171.7 2688.0M1582.7 2688.0L1349.9 26.2M-76.8 8.7L16774.9 2688.0M2186.5 2688.0L1367.7 27.0M-66.2 8.2L17378.1 2688.0M2790.4 2688.0L1385.8 27.8M-55.7 7.7L17981.2 2688.0M3394.2 2688.0L1404.4 28.6M-45.4 7.3L18584.4 2688.0M3998.0 2688.0L1423.3 29.4M-35.2 6.8L19187.6 2688.0M4601.8 2688.0L1442.5 30.3M-15.2 6.0L20393.9 2688.0M5809.5 2688.0L1482.3 32.0M-5.5 5.5L20997.0 2688.0M6413.3 2688.0L1502.8 32.9M4.1 5.1L21600.2 2688.0M7017.1 2688.0L1523.8 33.9M13.6 4.7L22203.4 2688.0M7621.0 2688.0L1545.2 34.8M22.9 4.3L22806.5 2688.0M8224.8 2688.0L1567.1 35.8M32.1 3.9L23409.7 2688.0M8828.6 2688.0L1589.4 36.7M41.2 3.5L24012.8 2688.0M9432.4 2688.0L1612.2 37.7M50.2 3.1L24616.0 2688.0M10036.3 2688.0L1635.6 38.8M59.0 2.7L25219.2 2688.0M10640.1 2688.0L1659.5 39.8M76.3 2.0L26425.5 2688.0M11847.7 2688.0L1708.9 42.0M84.8 1.6L27028.6 2688.0M12451.6 2688.0L1734.5 43.1M93.2 1.2L27631.8 2688.0M13055.4 2688.0L1760.7 44.2M101.5 0.9L28235.0 2688.0M13659.2 2688.0L1787.5 45.4M109.6 0.5L28838.1 2688.0M14263.0 2688.0L1815.0 46.6M117.6 0.1L29441.3 2688.0M14866.9 2688.0L1843.2 47.9M125.6 -0.2L30044.4 2688.0M15470.7 2688.0L1872.0 49.1M133.4 -0.5L30647.6 2688.0M16074.5 2688.0L1901.6 50.4M141.2 -0.9L31250.8 2688.0M16678.3 2688.0L1932.0 51.8M156.3 -1.6L32457.1 2688.0M17886.0 2688.0L1995.1 54.5M163.8 -1.9L33060.2 2688.0M18489.8 2688.0L2027.9 56.0M171.1 -2.2L33663.4 2688.0M19093.6 2688.0L2061.6 57.5M178.4 -2.5L34266.6 2688.0M19697.5 2688.0L2096.2 59.0M185.6 -2.8L34869.7 2688.0M20301.3 2688.0L2131.8 60.5M192.7 -3.1L35472.9 2688.0M20905.1 2688.0L2168.4 62.1M199.7 -3.5L36076.0 2688.0M21508.9 2688.0L2206.0 63.8M206.6 -3.8L36679.2 2688.0M22112.8 2688.0L2244.7 65.5M213.4 -4.1L37282.4 2688.0M22716.6 2688.0L2284.5 67.2M226.8 -4.6L38488.7 2688.0M23924.2 2688.0L2367.9 70.9M233.4 -4.9L39091.8 2688.0M24528.0 2688.0L2411.4 72.8M240.0 -5.2L39695.0 2688.0M25131.9 2688.0L2456.4 74.8M246.4 -5.5L40298.2 2688.0M25735.7 2688.0L2502.8 76.8M252.8 -5.8L40901.3 2688.0M26339.5 2688.0L2550.6 78.9M259.0 -6.1L41504.5 2688.0M26943.3 2688.0L2600.0 81.1M265.3 -6.3L42107.6 2688.0M27547.2 2688.0L2651.1 83.3M271.4 -6.6L42710.8 2688.0M28151.0 2688.0L2703.9 85.6M277.5 -6.9L43314.0 2688.0M28754.8 2688.0L2758.5 88.0M289.4 -7.4L44520.3 2688.0M29962.5 2688.0L2873.6 93.1M295.3 -7.6L45123.5 2688.0M30566.3 2688.0L2934.3 95.7M301.1 -7.9L45726.6 2688.0M31170.1 2688.0L2997.2 98.5M306.9 -8.1L46329.8 2688.0M31773.9 2688.0L3062.5 101.4M312.6 -8.4L46932.9 2688.0M32377.8 2688.0L3130.3 104.3M318.2 -8.6L45929.3 2596.3M32981.6 2688.0L3200.7 107.4M323.7 -8.9L35071.9 1951.0M33585.4 2688.0L3274.0 110.7M329.2 -9.1L28466.9 1558.5M34189.2 2688.0L3350.3 114.0M334.7 -9.4L24025.1 1294.5M34793.1 2688.0L3429.7 117.5M345.4 -9.8L18429.1 961.9M36000.7 2688.0L3598.9 124.9M350.6 -10.1L16552.8 850.4M36604.5 2688.0L3689.1 128.9M355.9 -10.3L15047.9 761.0M37208.4 2688.0L3783.4 133.0M361.0 -10.5L13813.9 687.6M37812.2 2688.0L3882.1 137.3M366.1 -10.7L12783.8 626.4M38416.0 2688.0L3985.5 141.9M371.2 -11.0L11910.9 574.5M39019.8 2688.0L4093.9 146.6M376.2 -11.2L11161.7 530.0M39623.7 2688.0L4207.7 151.6M381.1 -11.4L10511.8 491.4M40227.5 2688.0L4327.4 156.9M386.0 -11.6L9942.5 457.5M40831.3 2688.0L4453.3 162.4M395.7 -12.0L8992.6 401.1M42039.0 2688.0L4726.2 174.4M400.4 -12.2L8592.2 377.3M42642.8 2688.0L4874.3 180.9M405.1 -12.5L8231.7 355.9M43246.6 2688.0L5031.0 187.7M409.8 -12.7L7905.3 336.5M43850.4 2688.0L5197.3 195.0M414.4 -12.9L7608.4 318.8M44454.3 2688.0L5373.9 202.8M419.0 -13.1L7337.3 302.7M45058.1 2688.0L5561.9 211.0M423.5 -13.3L7088.6 287.9M45661.9 2688.0L5762.4 219.8M428.0 -13.5L6859.8 274.3M46265.7 2688.0L5976.7 229.2M432.4 -13.6L6648.5 261.8M46869.5 2688.0L6206.2 239.3" stroke="#393939" stroke-width="1" fill="none"/><path mask="url(#mma)" d="M-5536.3 247.9L-46556.9 2688.0M-5536.3 247.9L436.8 -13.8M-3692.3 167.1L-40525.3 2688.0M-8470.2 422.4L482.7 -11.8M-2627.9 120.5L-34493.7 2688.0M-19470.1 1076.8L533.6 -9.6M-1934.9 90.1L-28462.1 2688.0M-43100.3 2688.0L590.1 -7.1M-1447.9 68.8L-22430.5 2688.0M-37062.0 2688.0L653.5 -4.3M-1086.9 52.9L-16398.9 2688.0M-31023.8 2688.0L724.9 -1.2M-808.6 40.7L-10367.3 2688.0M-24985.5 2688.0L806.0 2.4M-587.5 31.0L-4335.7 2688.0M-18947.3 2688.0L898.9 6.4M-407.6 23.2L1695.9 2688.0M-12909.1 2688.0L1006.5 11.2M-258.4 16.6L7727.5 2688.0M-6870.8 2688.0L1132.5 16.7M-132.6 11.1L13759.1 2688.0M-832.6 2688.0L1281.9 23.2M-25.1 6.4L19790.7 2688.0M5205.7 2688.0L1462.2 31.2M67.7 2.3L25822.3 2688.0M11243.9 2688.0L1683.9 40.9M148.8 -1.2L31853.9 2688.0M17282.2 2688.0L1963.1 53.1M220.2 -4.3L37885.5 2688.0M23320.4 2688.0L2325.6 69.0M283.5 -7.1L43917.1 2688.0M29358.6 2688.0L2815.1 90.5M340.1 -9.6L20833.4 1104.8M35396.9 2688.0L3512.5 121.1M390.9 -11.8L9439.8 427.7M41435.1 2688.0L4586.1 168.2M436.8 -13.8L6452.7 250.1M47473.4 2688.0L6452.7 250.1" stroke="#4a4a4a" stroke-width="1" fill="none"/></g></svg>
<svg class="a" style="left:0px;top:0px;pointer-events:none" width="1200" height="657" viewBox="0 0 1200 657"><path d="M462.6 88.5 V336.7" stroke="#3d8550" stroke-width="1.1"/><path d="M462.6 336.7 L636.1 279.2" stroke="#3466bd" stroke-width="1.25"/><path d="M624.9 279.2 L636.1 279.2 L637.8 282.5" fill="none" stroke="#3466bd" stroke-width="1.1"/><path d="M462.6 336.7 L743.4 430.4" stroke="#c84646" stroke-width="1.25"/><path d="M725.8 430.6 L743.4 430.4 L738.2 423.2" fill="none" stroke="#c84646" stroke-width="1.1"/></svg>
<div class="a" style="left:27px;top:90px;width:30px;height:9.5px;background:rgba(38,38,38,0.75);"></div>
<div class="t" style="left:28.5px;top:91.32px;font-size:7.3px;color:#e6e6e6;">透视视图</div>
<div class="a" style="left:438px;top:90px;width:50px;height:9.5px;background:rgba(38,38,38,0.75);"></div>
<div class="t" style="left:439.5px;top:91.32px;font-size:7.3px;color:#e6e6e6;">默认摄像机</div>
<svg class="a" style="left:476px;top:91px;" width="10" height="8" viewBox="0 0 10 8"><rect x="0.8" y="1.5" width="5.5" height="5" rx="0.8" fill="none" stroke="#aab4d8" stroke-width="0.9"/><path d="M6.5 4 L9 2.5 V6.5Z" fill="#aab4d8"/></svg>
<div class="a" style="left:26.5px;top:248px;width:29px;height:9.5px;background:rgba(38,38,38,0.75);"></div>
<div class="t" style="left:28.0px;top:248.92px;font-size:7.3px;color:#e6e6e6;">移动</div>
<svg class="a" style="left:43px;top:248.5px;" width="9" height="9" viewBox="0 0 9 9"><path d="M4.5 0.8 V8.2 M0.8 4.5 H8.2" stroke="#cfcfcf" stroke-width="0.8"/><path d="M4.5 0 L3.5 1.5 H5.5Z M4.5 9 L3.5 7.5 H5.5Z M0 4.5 L1.5 3.5 V5.5Z M9 4.5 L7.5 3.5 V5.5Z" fill="#cfcfcf"/></svg>
<div class="a" style="left:27px;top:574px;width:52px;height:8.5px;background:rgba(38,38,38,0.75);"></div>
<div class="t" style="left:28.5px;top:574.92px;font-size:7.3px;color:#e6e6e6;">查看变换：工程</div>
<div class="a" style="left:842px;top:574px;width:57.5px;height:8.5px;background:rgba(38,38,38,0.75);"></div>
<div class="t" style="left:843.5px;top:574.92px;font-size:7.3px;color:#e6e6e6;">网格间距 : 50 cm</div>
<svg class="a" style="left:866px;top:88px;" width="34" height="34" viewBox="0 0 34 34"><path d="M11.3 11.8 V22.5" stroke="#3fa050" stroke-width="1.1"/><path d="M11.3 22.5 L19 20.2" stroke="#3f70d0" stroke-width="1.1"/><path d="M11.3 22.5 L19.5 25.3" stroke="#d04040" stroke-width="1.1"/><text x="11.5" y="9.2" text-anchor="middle" font-size="7" font-weight="bold" fill="#3fb050" font-family="Liberation Sans">Y</text><text x="25" y="22" text-anchor="middle" font-size="7" font-weight="bold" fill="#3f72d0" font-family="Liberation Sans">Z</text><text x="25" y="30" text-anchor="middle" font-size="7" font-weight="bold" fill="#d84040" font-family="Liberation Sans">X</text></svg>
<div class="a" style="left:901.5px;top:72px;width:26px;height:568px;background:#2a2a2a;"></div>
<div class="a" style="left:903.5px;top:72.2px;width:22.6px;height:22.599999999999994px;background:#383838;border-radius:2.5px"></div>
<div class="a" style="left:903.5px;top:100.7px;width:22.6px;height:68.60000000000001px;background:#383838;border-radius:2.5px"></div>
<div class="a" style="left:903.5px;top:176px;width:22.6px;height:68.9px;background:#383838;border-radius:2.5px"></div>
<div class="a" style="left:903.5px;top:247.6px;width:22.6px;height:46.20000000000002px;background:#383838;border-radius:2.5px"></div>
<div class="a" style="left:903.5px;top:295.7px;width:22.6px;height:22.80000000000001px;background:#383838;border-radius:2.5px"></div>
<div class="a" style="left:903.5px;top:325.4px;width:22.6px;height:68.5px;background:#383838;border-radius:2.5px"></div>
<div class="a" style="left:903.5px;top:406.4px;width:22.6px;height:22.900000000000034px;background:#303030;border-radius:2.5px"></div>
<div class="a" style="left:903.5px;top:123.1px;width:22.6px;height:1px;background:#2d2d2d;"></div>
<div class="a" style="left:903.5px;top:146.0px;width:22.6px;height:1px;background:#2d2d2d;"></div>
<div class="a" style="left:903.5px;top:198.5px;width:22.6px;height:1px;background:#2d2d2d;"></div>
<div class="a" style="left:903.5px;top:221.5px;width:22.6px;height:1px;background:#2d2d2d;"></div>
<div class="a" style="left:903.5px;top:270.2px;width:22.6px;height:1px;background:#2d2d2d;"></div>
<div class="a" style="left:903.5px;top:347.7px;width:22.6px;height:1px;background:#2d2d2d;"></div>
<div class="a" style="left:903.5px;top:370.5px;width:22.6px;height:1px;background:#2d2d2d;"></div>
<svg class="a" style="left:903.5px;top:72.2px;" width="22.6" height="22.6" viewBox="0 0 22.6 22.6"><circle cx="14" cy="8" r="4.6" fill="#cfd6ff"/><path d="M5 4 V18 H18" fill="none" stroke="#cfd6ff" stroke-width="1.2"/><path d="M3.5 5.5 L5 3 L6.5 5.5Z M16.5 16.5 L19 18 L16.5 19.5Z" fill="#cfd6ff"/></svg>
<svg class="a" style="left:903.5px;top:100.7px;" width="22.6" height="22.9" viewBox="0 0 22.6 22.9"><rect x="5.5" y="5.5" width="11" height="11" fill="none" stroke="#86d2ee" stroke-width="1.4"/><path d="M18.7 21.2 L21.7 21.2 L21.7 18.2Z" fill="#bbb"/></svg>
<svg class="a" style="left:903.5px;top:123.6px;" width="22.6" height="22.9" viewBox="0 0 22.6 22.9"><polygon points="11,4 17.5,7.5 17.5,14.5 11,18 4.5,14.5 4.5,7.5" fill="#86d2ee"/><path d="M4.5 7.5 L11 11 L17.5 7.5 M11 11 V18" fill="none" stroke="#4a8fb0" stroke-width="0.7"/><path d="M18.7 21.2 L21.7 21.2 L21.7 18.2Z" fill="#bbb"/></svg>
<svg class="a" style="left:903.5px;top:146.5px;" width="22.6" height="22.8" viewBox="0 0 22.6 22.8"><path d="M4.5 6.5 V4.5 H17.5 V6.5 M11 4.5 V18 M8 18 H14" fill="none" stroke="#86d2ee" stroke-width="1.6"/><path d="M18.7 21.2 L21.7 21.2 L21.7 18.2Z" fill="#bbb"/></svg>
<svg class="a" style="left:903.5px;top:176px;" width="22.6" height="23" viewBox="0 0 22.6 23"><rect x="5" y="5" width="12" height="12" fill="none" stroke="#aaa" stroke-width="0.6"/><circle cx="11" cy="11" r="4.7" fill="#6bdc6b"/><rect x="3.8" y="3.8" width="2.4" height="2.4" fill="#333" stroke="#ddd" stroke-width="0.7"/><rect x="9.8" y="3.0999999999999996" width="2.4" height="2.4" fill="#333" stroke="#ddd" stroke-width="0.7"/><rect x="15.8" y="3.8" width="2.4" height="2.4" fill="#333" stroke="#ddd" stroke-width="0.7"/><rect x="16.5" y="9.8" width="2.4" height="2.4" fill="#333" stroke="#ddd" stroke-width="0.7"/><rect x="15.8" y="15.8" width="2.4" height="2.4" fill="#333" stroke="#ddd" stroke-width="0.7"/><rect x="9.8" y="16.5" width="2.4" height="2.4" fill="#333" stroke="#ddd" stroke-width="0.7"/><rect x="3.8" y="15.8" width="2.4" height="2.4" fill="#333" stroke="#ddd" stroke-width="0.7"/><rect x="3.0999999999999996" y="9.8" width="2.4" height="2.4" fill="#333" stroke="#ddd" stroke-width="0.7"/><path d="M18.7 21.2 L21.7 21.2 L21.7 18.2Z" fill="#c9c96a"/></svg>
<svg class="a" style="left:903.5px;top:199px;" width="22.6" height="23" viewBox="0 0 22.6 23"><path d="M11 4.324 L14.6 6.412 L11 8.5 L7.4 6.412Z" fill="#9ef09e"/><path d="M7.4 6.412 L11 8.5 L11 12.676 L7.4 10.588000000000001Z" fill="#5fd35f"/><path d="M14.6 6.412 L11 8.5 L11 12.676 L14.6 10.588000000000001Z" fill="#3fae4a"/><path d="M7.4 10.424 L11.0 12.512 L7.4 14.6 L3.8000000000000003 12.512Z" fill="#9ef09e"/><path d="M3.8000000000000003 12.512 L7.4 14.6 L7.4 18.776 L3.8000000000000003 16.688Z" fill="#5fd35f"/><path d="M11.0 12.512 L7.4 14.6 L7.4 18.776 L11.0 16.688Z" fill="#3fae4a"/><path d="M14.6 10.424 L18.2 12.512 L14.6 14.6 L11.0 12.512Z" fill="#9ef09e"/><path d="M11.0 12.512 L14.6 14.6 L14.6 18.776 L11.0 16.688Z" fill="#5fd35f"/><path d="M18.2 12.512 L14.6 14.6 L14.6 18.776 L18.2 16.688Z" fill="#3fae4a"/><path d="M18.7 21.2 L21.7 21.2 L21.7 18.2Z" fill="#bbb"/></svg>
<svg class="a" style="left:903.5px;top:222px;" width="22.6" height="22.9" viewBox="0 0 22.6 22.9"><circle cx="11" cy="11" r="4.4" fill="none" stroke="#fff" stroke-width="2.4" stroke-dasharray="2 1.4"/><circle cx="11" cy="11" r="1.8" fill="#6bdc6b"/><circle cx="11.0" cy="4.5" r="1.3" fill="#6bdc6b"/><circle cx="16.6" cy="7.8" r="1.3" fill="#6bdc6b"/><circle cx="16.6" cy="14.2" r="1.3" fill="#6bdc6b"/><circle cx="11.0" cy="17.5" r="1.3" fill="#6bdc6b"/><circle cx="5.4" cy="14.2" r="1.3" fill="#6bdc6b"/><circle cx="5.4" cy="7.7" r="1.3" fill="#6bdc6b"/><path d="M18.7 21.2 L21.7 21.2 L21.7 18.2Z" fill="#bbb"/></svg>
<svg class="a" style="left:903.5px;top:247.6px;" width="22.6" height="23" viewBox="0 0 22.6 23"><path d="M6 9 C5 6 8 4 11 5.5 L16 10.5 C18 13 16.5 17 13 16 L7.5 12 C6.5 11 6 10 6 9Z" fill="none" stroke="#9a8ef0" stroke-width="1.2"/><path d="M11.5 8 C14 10 15 12 14 15" fill="none" stroke="#9a8ef0" stroke-width="0.9"/><path d="M18.7 21.2 L21.7 21.2 L21.7 18.2Z" fill="#bbb"/></svg>
<svg class="a" style="left:903.5px;top:270.7px;" width="22.6" height="23" viewBox="0 0 22.6 23"><path d="M5 4 V18 H18" fill="none" stroke="#9a8ef0" stroke-width="1.2"/><path d="M3.5 5.5 L5 3 L6.5 5.5Z M16.5 16.5 L19 18 L16.5 19.5Z" fill="#9a8ef0"/><path d="M13 4 L16.3 5.8 V9.6 L13 11.4 L9.7 9.6 V5.8Z M9.7 5.8 L13 7.6 L16.3 5.8 M13 7.6 V11.4" fill="none" stroke="#9a8ef0" stroke-width="0.8" stroke-linejoin="round"/><path d="M18.7 21.2 L21.7 21.2 L21.7 18.2Z" fill="#bbb"/></svg>
<svg class="a" style="left:903.5px;top:295.7px;" width="22.6" height="22.8" viewBox="0 0 22.6 22.8"><path d="M5 8 L10 5 L10 14 L5 17Z M12 8 L17 5 L17 14 L12 17Z M10 5 L12 8 M10 14 L12 17" fill="none" stroke="#e07ad8" stroke-width="1.1"/><path d="M18.7 21.2 L21.7 21.2 L21.7 18.2Z" fill="#bbb"/></svg>
<svg class="a" style="left:903.5px;top:325.4px;" width="22.6" height="22.8" viewBox="0 0 22.6 22.8"><circle cx="12.2" cy="9.8" r="6.3" fill="none" stroke="#d0d0d0" stroke-width="1.1"/><ellipse cx="12.2" cy="9.8" rx="2.6" ry="6.3" fill="none" stroke="#d0d0d0" stroke-width="0.8"/><path d="M6 9.8 H18.5 M7 6.5 H17.5 M7 13 H17.5 M12.2 3.5 V16" stroke="#d0d0d0" stroke-width="0.8"/><rect x="2.5" y="13.5" width="8.6" height="6" rx="1.4" fill="#0d0d0d"/><text x="3.5" y="18.4" font-size="5.2" fill="#e8e8e8" font-family="Liberation Sans" font-weight="bold" textLength="6.6" lengthAdjust="spacingAndGlyphs">ST</text><path d="M18.7 21.2 L21.7 21.2 L21.7 18.2Z" fill="#bbb"/></svg>
<svg class="a" style="left:903.5px;top:348.2px;" width="22.6" height="22.8" viewBox="0 0 22.6 22.8"><path d="M5.5 9 a3 3 0 0 1 3 -3 H12 a3 3 0 0 1 3 3 V16 H5.5Z" fill="none" stroke="#d0d0d0" stroke-width="1.2"/><path d="M15.5 12 L19.8 8.3 V15.7Z" fill="#d0d0d0"/><rect x="2.5" y="13.8" width="8.6" height="6" rx="1.4" fill="#0d0d0d"/><text x="3.5" y="18.700000000000003" font-size="5.2" fill="#e8e8e8" font-family="Liberation Sans" font-weight="bold" textLength="6.6" lengthAdjust="spacingAndGlyphs">ST</text><path d="M18.7 21.2 L21.7 21.2 L21.7 18.2Z" fill="#bbb"/></svg>
<svg class="a" style="left:903.5px;top:371px;" width="22.6" height="22.9" viewBox="0 0 22.6 22.9"><path d="M8.2 13 A4 4 0 1 1 15 13" fill="none" stroke="#d0d0d0" stroke-width="1.2"/><path d="M9.5 14.8 H14 M10 16.8 H13.5" stroke="#d0d0d0" stroke-width="0.9"/><path d="M11.6 2.3 V4.2 M5 9.5 H6.8 M16.5 9.5 H18.3 M6.6 4.8 L7.9 6.1 M16.6 4.8 L15.3 6.1" stroke="#d0d0d0" stroke-width="1"/><rect x="2.5" y="13.8" width="8.6" height="6" rx="1.4" fill="#0d0d0d"/><text x="3.5" y="18.700000000000003" font-size="5.2" fill="#e8e8e8" font-family="Liberation Sans" font-weight="bold" textLength="6.6" lengthAdjust="spacingAndGlyphs">ST</text><path d="M18.7 21.2 L21.7 21.2 L21.7 18.2Z" fill="#bbb"/></svg>
<svg class="a" style="left:903.5px;top:406.4px;" width="22.6" height="22.9" viewBox="0 0 22.6 22.9"><polygon points="11.3,3.8 17.6,7.5 17.6,15 11.3,18.7 5,15 5,7.5" fill="none" stroke="#4a4a4a" stroke-width="0.9"/><path d="M8.5 14.2 L14.8 7.8" stroke="#585858" stroke-width="1.4"/><path d="M14 7 L15.6 8.6" stroke="#585858" stroke-width="0.8"/><path d="M18.7 21.2 L21.7 21.2 L21.7 18.2Z" fill="#6a6a6a"/></svg>
<div class="a" style="left:927.5px;top:52px;width:272.5px;height:263px;background:#262626;"></div>
<div class="a" style="left:926.8px;top:72px;width:1.2px;height:568px;background:#1f1f1f;"></div>
<div class="a" style="left:927.5px;top:54.7px;width:272.5px;height:13.5px;background:#1c1c1c;"></div>
<div class="a" style="left:927.5px;top:54.7px;width:29.4px;height:13.5px;background:#2a2a2a;"></div>
<div class="t" style="left:935px;top:56.51px;font-size:7.2px;color:#e6e6e6;">对象</div>
<div class="t" style="left:965.5px;top:56.51px;font-size:7.2px;color:#8e8e8e;">场次</div>
<div class="a" style="left:927.5px;top:68.2px;width:272.5px;height:14.5px;background:#282828;"></div>
<svg class="a" style="left:931px;top:72px;" width="10" height="7" viewBox="0 0 10 7"><path d="M0.3 1 H9.5 M0.3 3.5 H9.5 M0.3 6 H9.5" stroke="#cfcfcf" stroke-width="1"/></svg>
<div class="t" style="left:946px;top:72.31px;font-size:7.2px;color:#c0c0c0;">文件</div>
<div class="t" style="left:969px;top:72.31px;font-size:7.2px;color:#c0c0c0;">编辑</div>
<div class="t" style="left:992px;top:72.31px;font-size:7.2px;color:#c0c0c0;">查看</div>
<div class="t" style="left:1015px;top:72.31px;font-size:7.2px;color:#c0c0c0;">对象</div>
<div class="t" style="left:1038px;top:72.31px;font-size:7.2px;color:#c0c0c0;">标签</div>
<div class="t" style="left:1061px;top:72.31px;font-size:7.2px;color:#c0c0c0;">书签</div>
<svg class="a" style="left:1160px;top:70px;" width="40" height="12" viewBox="0 0 40 12"><circle cx="7" cy="5" r="3.4" fill="none" stroke="#c8c8c8" stroke-width="1"/><path d="M9.5 7.5 L12 10" stroke="#c8c8c8" stroke-width="1.2"/><path d="M16 10.5 V5.5 L19.5 2 L23 5.5 V10.5Z" fill="none" stroke="#c8c8c8" stroke-width="1"/><path d="M18.5 10.5 V8 H20.5 V10.5" fill="none" stroke="#c8c8c8" stroke-width="0.8"/><path d="M27 3 H37 M29 6 H35 M31 9 H33" stroke="#c8c8c8" stroke-width="1.1"/></svg>
<div class="a" style="left:927.5px;top:82.7px;width:272.5px;height:232px;background:#2a2a2a;"></div>
<div class="a" style="left:958.2px;top:82.7px;width:1px;height:232px;background:#232323;"></div>
<div class="a" style="left:927.5px;top:315px;width:272.5px;height:325px;background:#262626;"></div>
<div class="a" style="left:927.5px;top:315.5px;width:272.5px;height:15px;background:#1c1c1c;"></div>
<div class="a" style="left:927.5px;top:315.5px;width:29.3px;height:15px;background:#2a2a2a;"></div>
<div class="t" style="left:935px;top:319.21px;font-size:7.2px;color:#e6e6e6;">属性</div>
<div class="t" style="left:965px;top:319.21px;font-size:7.2px;color:#8e8e8e;">层</div>
<div class="a" style="left:927.5px;top:330.5px;width:272.5px;height:15px;background:#282828;"></div>
<svg class="a" style="left:931px;top:334.5px;" width="10" height="7" viewBox="0 0 10 7"><path d="M0.3 1 H9.5 M0.3 3.5 H9.5 M0.3 6 H9.5" stroke="#cfcfcf" stroke-width="1"/></svg>
<div class="t" style="left:947px;top:334.51px;font-size:7.2px;color:#b8b8b8;">模式</div>
<div class="t" style="left:969px;top:334.51px;font-size:7.2px;color:#b8b8b8;">编辑</div>
<div class="t" style="left:992px;top:334.51px;font-size:7.2px;color:#b8b8b8;">用户数据</div>
<svg class="a" style="left:1100px;top:328px;" width="100" height="18" viewBox="0 0 100 18"><path d="M12 9.8 H20.8 M15.3 6.5 L12 9.8 L15.3 13.1" fill="none" stroke="#c8c8c8" stroke-width="1"/><path d="M28 9.8 H33 M31 7.5 L33.3 9.8 L31 12.1" fill="none" stroke="#555" stroke-width="0.9"/><path d="M41.3 6 V14" stroke="#4a4a4a" stroke-width="0.8"/><circle cx="52.9" cy="8.3" r="3.1" fill="none" stroke="#c8c8c8" stroke-width="0.9"/><path d="M55.2 10.6 L58.3 13.6" stroke="#c8c8c8" stroke-width="1"/><path d="M63 7 H71 M64.5 9.5 H69.5 M66 12.5 H68" stroke="#bdbdbd" stroke-width="0.9"/><rect x="76.3" y="8.8" width="7.4" height="5.2" fill="none" stroke="#c8c8c8" stroke-width="0.9"/><path d="M77.8 8.8 V7 a2.4 2.4 0 0 1 4.8 0 V7.6" fill="none" stroke="#c8c8c8" stroke-width="0.9"/><circle cx="92.3" cy="10.5" r="5" fill="none" stroke="#c8c8c8" stroke-width="0.9"/><circle cx="92.3" cy="10.5" r="2" fill="none" stroke="#c8c8c8" stroke-width="0.9"/></svg>
<div class="t" style="left:1001px;top:313.7px;font-size:25px;font-weight:bold;color:rgba(255,255,255,0.2);-webkit-text-stroke:0;letter-spacing:0.5px;transform:scale(1.14,1.12);transform-origin:left top">www.xu5.cc</div>
<div class="a" style="left:927.5px;top:345.5px;width:272.5px;height:294.5px;background:#2b2b2b;"></div>
<svg class="a" style="left:933px;top:348px;" width="10" height="12" viewBox="0 0 10 12"><path d="M2.5 0.8 H6.5 L9 3.3 V9.8 a1.5 1.5 0 0 1 -1.5 1.5 H2.5 a1.5 1.5 0 0 1 -1.5 -1.5 V2.3 a1.5 1.5 0 0 1 1.5 -1.5Z" fill="#d8d8d8"/><circle cx="5" cy="7" r="1.9" fill="none" stroke="#333" stroke-width="1.1" stroke-dasharray="1 0.6"/></svg>
<div class="t" style="left:948px;top:350.72px;font-size:7.3px;color:#cfcfcf;">工程</div>
<div class="a" style="left:1151px;top:348.4px;width:43px;height:11.3px;background:#333333;border-radius:5px 0 0 5px"></div>
<div class="a" style="left:1194.8px;top:348.4px;width:5.2px;height:11.3px;background:#333333;"></div>
<div class="t" style="left:1156px;top:350.61px;font-size:7.2px;color:#c8c8c8;">默认</div>
<div class="a" style="left:1194px;top:348.4px;width:0.8px;height:11.3px;background:#262626;"></div>
<div class="a" style="left:932.8px;top:364.3px;width:25.200000000000045px;height:11.5px;background:#5b5ea6;border-radius:2.5px"></div>
<div class="t" style="left:945.4px;top:365.61px;font-size:7.2px;color:#f0f0f0;transform:translateX(-50%);">工程</div>
<div class="a" style="left:961px;top:364.3px;width:24.799999999999955px;height:11.5px;background:#383838;border-radius:2.5px"></div>
<div class="t" style="left:973.4px;top:365.61px;font-size:7.2px;color:#c0c0c0;transform:translateX(-50%);">信息</div>
<div class="a" style="left:989.2px;top:364.3px;width:41.399999999999864px;height:11.5px;background:#383838;border-radius:2.5px"></div>
<div class="t" style="left:1009.9px;top:365.61px;font-size:7.2px;color:#c0c0c0;transform:translateX(-50%);">Cineware</div>
<div class="a" style="left:1034px;top:364.3px;width:38px;height:11.5px;background:#383838;border-radius:2.5px"></div>
<svg class="a" style="left:1040px;top:366.90000000000003px;" width="7" height="7" viewBox="0 0 7 7"><path d="M1 6 V3.3 a2.4 2.4 0 0 1 4.8 0 V6 M0.3 6 H6.5" fill="none" stroke="#9c9c9c" stroke-width="0.6"/></svg>
<div class="t" style="left:1048.5px;top:365.91px;font-size:7.2px;color:#c0c0c0;">XRefs</div>
<div class="a" style="left:1076px;top:364.3px;width:33.799999999999955px;height:11.5px;background:#383838;border-radius:2.5px"></div>
<svg class="a" style="left:1082px;top:366.90000000000003px;" width="7" height="7" viewBox="0 0 7 7"><path d="M1 6 V3.3 a2.4 2.4 0 0 1 4.8 0 V6 M0.3 6 H6.5" fill="none" stroke="#9c9c9c" stroke-width="0.6"/></svg>
<div class="t" style="left:1090.5px;top:365.91px;font-size:7.2px;color:#c0c0c0;">动画</div>
<div class="a" style="left:1113.7px;top:364.3px;width:34.299999999999955px;height:11.5px;background:#383838;border-radius:2.5px"></div>
<svg class="a" style="left:1119.7px;top:366.90000000000003px;" width="7" height="7" viewBox="0 0 7 7"><path d="M1 6 V3.3 a2.4 2.4 0 0 1 4.8 0 V6 M0.3 6 H6.5" fill="none" stroke="#9c9c9c" stroke-width="0.6"/></svg>
<div class="t" style="left:1128.2px;top:365.91px;font-size:7.2px;color:#c0c0c0;">子弹</div>
<div class="a" style="left:1151.3px;top:364.3px;width:34.5px;height:11.5px;background:#383838;border-radius:2.5px"></div>
<svg class="a" style="left:1157.3px;top:366.90000000000003px;" width="7" height="7" viewBox="0 0 7 7"><path d="M1 6 V3.3 a2.4 2.4 0 0 1 4.8 0 V6 M0.3 6 H6.5" fill="none" stroke="#9c9c9c" stroke-width="0.6"/></svg>
<div class="t" style="left:1165.8px;top:365.91px;font-size:7.2px;color:#c8c87a;">模拟</div>
<div class="a" style="left:932.8px;top:378.5px;width:48.700000000000045px;height:11.899999999999977px;background:#383838;border-radius:2.5px"></div>
<svg class="a" style="left:938.8px;top:381.1px;" width="7" height="7" viewBox="0 0 7 7"><path d="M1 6 V3.3 a2.4 2.4 0 0 1 4.8 0 V6 M0.3 6 H6.5" fill="none" stroke="#9c9c9c" stroke-width="0.6"/></svg>
<div class="t" style="left:947.3px;top:380.51px;font-size:7.2px;color:#c0c0c0;">待办事项</div>
<div class="a" style="left:984.7px;top:378.5px;width:34.299999999999955px;height:11.899999999999977px;background:#383838;border-radius:2.5px"></div>
<svg class="a" style="left:990.7px;top:381.1px;" width="7" height="7" viewBox="0 0 7 7"><path d="M1 6 V3.3 a2.4 2.4 0 0 1 4.8 0 V6 M0.3 6 H6.5" fill="none" stroke="#9c9c9c" stroke-width="0.6"/></svg>
<div class="t" style="left:999.2px;top:380.51px;font-size:7.2px;color:#c0c0c0;">节点</div>
<div class="t" style="left:933px;top:397.17px;font-size:7.6px;color:#e0e0e0;">工程</div>
<div class="a" style="left:931px;top:408px;width:269px;height:1px;background:#222;"></div>
<svg class="a" style="left:938px;top:413px;" width="5" height="7" viewBox="0 0 5 7"><path d="M1 0.8 L3.8 3.5 L1 6.2" fill="none" stroke="#bbb" stroke-width="0.9"/></svg>
<div class="t" style="left:946px;top:413.51px;font-size:7.2px;color:#d8d8d8;">比例</div>
<div class="a" style="left:931px;top:424.5px;width:269px;height:1px;background:#222;"></div>
<svg class="a" style="left:937px;top:430px;" width="7" height="5" viewBox="0 0 7 5"><path d="M0.8 1 L3.5 3.8 L6.2 1" fill="none" stroke="#bbb" stroke-width="0.9"/></svg>
<div class="t" style="left:946px;top:430.51px;font-size:7.2px;color:#d8d8d8;">时间</div>
<div class="t" style="left:952px;top:446.01px;font-size:7.2px;color:#a8a8a8;">帧率</div>
<div class="a" style="left:983px;top:444px;width:49.6px;height:11px;background:#1f1f1f;border-radius:2px"></div>
<div class="t" style="left:1008px;top:445.61px;font-size:7.2px;color:#d0d0d0;transform:translateX(-50%);">30</div>
<div class="t" style="left:1048.6px;top:446.01px;font-size:7.2px;color:#a8a8a8;">工程时长</div>
<div class="a" style="left:1080px;top:444px;width:49px;height:11px;background:#1f1f1f;border-radius:2px"></div>
<div class="t" style="left:1104.5px;top:445.61px;font-size:7.2px;color:#d0d0d0;transform:translateX(-50%);">0 F</div>
<div class="t" style="left:952px;top:460.01px;font-size:7.2px;color:#a8a8a8;">最小时长</div>
<div class="a" style="left:983px;top:458px;width:49.6px;height:11px;background:#1f1f1f;border-radius:2px"></div>
<div class="t" style="left:1008px;top:459.61px;font-size:7.2px;color:#d0d0d0;transform:translateX(-50%);">0 F</div>
<div class="t" style="left:1048.6px;top:460.01px;font-size:7.2px;color:#a8a8a8;">最大时长</div>
<div class="a" style="left:1080px;top:458px;width:49px;height:11px;background:#1f1f1f;border-radius:2px"></div>
<div class="t" style="left:1104.5px;top:459.61px;font-size:7.2px;color:#d0d0d0;transform:translateX(-50%);">90 F</div>
<div class="t" style="left:952px;top:474.21px;font-size:7.2px;color:#a8a8a8;">预览最小</div>
<div class="a" style="left:983px;top:472.2px;width:49.6px;height:11px;background:#1f1f1f;border-radius:2px"></div>
<div class="t" style="left:1008px;top:473.81px;font-size:7.2px;color:#d0d0d0;transform:translateX(-50%);">0 F</div>
<div class="t" style="left:1048.6px;top:474.21px;font-size:7.2px;color:#a8a8a8;">预览最大</div>
<div class="a" style="left:1080px;top:472.2px;width:49px;height:11px;background:#1f1f1f;border-radius:2px"></div>
<div class="t" style="left:1104.5px;top:473.81px;font-size:7.2px;color:#d0d0d0;transform:translateX(-50%);">90 F</div>
<div class="a" style="left:931px;top:490.2px;width:269px;height:1px;background:#222;"></div>
<svg class="a" style="left:938.5px;top:495.7px;" width="5" height="7" viewBox="0 0 5 7"><path d="M1 0.8 L3.8 3.5 L1 6.2" fill="none" stroke="#bbb" stroke-width="0.9"/></svg>
<div class="t" style="left:946px;top:495.71px;font-size:7.2px;color:#d8d8d8;">执行</div>
<div class="a" style="left:931px;top:507.5px;width:269px;height:1px;background:#222;"></div>
<svg class="a" style="left:938.5px;top:513.0px;" width="5" height="7" viewBox="0 0 5 7"><path d="M1 0.8 L3.8 3.5 L1 6.2" fill="none" stroke="#bbb" stroke-width="0.9"/></svg>
<div class="t" style="left:946px;top:513.01px;font-size:7.2px;color:#d8d8d8;">资产浏览器</div>
<div class="a" style="left:931px;top:525px;width:269px;height:1px;background:#222;"></div>
<svg class="a" style="left:938.5px;top:530.5px;" width="5" height="7" viewBox="0 0 5 7"><path d="M1 0.8 L3.8 3.5 L1 6.2" fill="none" stroke="#bbb" stroke-width="0.9"/></svg>
<div class="t" style="left:946px;top:530.51px;font-size:7.2px;color:#d8d8d8;">显示</div>
<div class="a" style="left:931px;top:542.5px;width:269px;height:1px;background:#222;"></div>
<svg class="a" style="left:938.5px;top:548.0px;" width="5" height="7" viewBox="0 0 5 7"><path d="M1 0.8 L3.8 3.5 L1 6.2" fill="none" stroke="#bbb" stroke-width="0.9"/></svg>
<div class="t" style="left:946px;top:548.01px;font-size:7.2px;color:#d8d8d8;">色彩管理</div>
<div class="a" style="left:931px;top:559.5px;width:269px;height:1px;background:#222;"></div>
<div class="a" style="left:927.5px;top:639px;width:272.5px;height:1px;background:#1e1e1e;"></div>
<svg class="a" style="left:1147.3px;top:383.5px;" width="32" height="35" viewBox="0 0 32 35"><defs><linearGradient id="og" x1="0" y1="0" x2="0.3" y2="1"><stop offset="0" stop-color="#fbe3ae"/><stop offset="0.5" stop-color="#f6d08a"/><stop offset="1" stop-color="#f8dca0"/></linearGradient></defs><path d="M15.75 0.8 L30.8 9.3 V25.7 L15.75 34.2 L0.7 25.7 V9.3Z" fill="url(#og)" stroke="#fbe6bd" stroke-width="1.2" stroke-linejoin="round"/><path d="M0.7 9.3 L15.75 17.5 L30.8 9.3 M15.75 17.5 V34.2" fill="none" stroke="#f3c877" stroke-width="0.6" opacity="0.6"/><path d="M3.2 9.8 L7.3 10.7 L10 12.3 L15.5 12 C19 10 22.5 8 25.6 6.6 C23.5 10 21.8 13.5 20 16.6 L26.5 19.4 L20.5 21.2 L20 29.9 C17 27 14.5 25.5 12.8 23.9 C10.5 21.5 9.6 19 10 16.6 L8.2 12.5Z" fill="#e0882e"/></svg>
<div class="a" style="left:24.5px;top:586px;width:877px;height:54px;background:#262626;"></div>
<div class="a" style="left:26.5px;top:588px;width:874px;height:3px;background-image:linear-gradient(90deg,#3b3b3b 1px,transparent 1px);background-size:2px 1px;background-repeat:repeat-x;background-position:0 0.5px"></div>
<div class="a" style="left:26.5px;top:590px;width:874px;height:1px;background-image:linear-gradient(90deg,#3b3b3b 1px,transparent 1px);background-size:2px 1px;background-repeat:repeat-x"></div>
<div class="a" style="left:26px;top:597.0px;width:2.5px;height:1px;background:#363636;"></div>
<div class="a" style="left:26px;top:615.0px;width:2.5px;height:1px;background:#363636;"></div>
<div class="a" style="left:26px;top:599.4px;width:2.5px;height:1px;background:#363636;"></div>
<div class="a" style="left:26px;top:617.4px;width:2.5px;height:1px;background:#363636;"></div>
<div class="a" style="left:26px;top:601.8px;width:2.5px;height:1px;background:#363636;"></div>
<div class="a" style="left:26px;top:619.8px;width:2.5px;height:1px;background:#363636;"></div>
<div class="a" style="left:26px;top:604.2px;width:2.5px;height:1px;background:#363636;"></div>
<div class="a" style="left:26px;top:622.2px;width:2.5px;height:1px;background:#363636;"></div>
<div class="a" style="left:26px;top:606.6px;width:2.5px;height:1px;background:#363636;"></div>
<div class="a" style="left:26px;top:624.6px;width:2.5px;height:1px;background:#363636;"></div>
<div class="a" style="left:29px;top:593px;width:18px;height:17.600000000000023px;background:#353535;border-radius:2.5px"></div>
<svg class="a" style="left:29px;top:593px;" width="18" height="17.6" viewBox="0 0 18 17.6"><rect x="5.8" y="5.2" width="6.5" height="6.5" transform="rotate(45 9 8.5)" fill="none" stroke="#e0e0e0" stroke-width="1.1"/></svg>
<div class="a" style="left:245.6px;top:593.4px;width:124.4px;height:17.200000000000045px;background:#353535;border-radius:2.5px"></div>
<svg class="a" style="left:245.6px;top:593.4px;" width="17.771428571428572" height="17.2" viewBox="0 0 17.771428571428572 17.2"><path d="M5 4.5 V13 M13 4.5 L7 8.8 L13 13Z" stroke="#c8c8c8" stroke-width="1.3" fill="#c8c8c8"/></svg>
<svg class="a" style="left:263.37142857142857px;top:593.4px;" width="17.771428571428572" height="17.2" viewBox="0 0 17.771428571428572 17.2"><path d="M8 8.8 L11.5 4.5 V13Z" fill="#c8c8c8"/><rect x="3.3" y="7.2" width="3.2" height="3.2" transform="rotate(45 4.9 8.8)" fill="none" stroke="#c8c8c8" stroke-width="0.9"/><path d="M11.8 4.5 L14 4.5 L14 13 L11.8 13" fill="#c8c8c8"/></svg>
<div class="a" style="left:263.37142857142857px;top:593.4px;width:1px;height:17.2px;background:#2e2e2e;"></div>
<svg class="a" style="left:281.1428571428571px;top:593.4px;" width="17.771428571428572" height="17.2" viewBox="0 0 17.771428571428572 17.2"><path d="M4 8.8 L10.5 4.5 V13Z" fill="#c8c8c8"/><path d="M12.5 4.5 V13" stroke="#c8c8c8" stroke-width="1.3"/></svg>
<div class="a" style="left:281.1428571428571px;top:593.4px;width:1px;height:17.2px;background:#2e2e2e;"></div>
<svg class="a" style="left:298.9142857142857px;top:593.4px;" width="17.771428571428572" height="17.2" viewBox="0 0 17.771428571428572 17.2"><path d="M5.5 3.5 L14 8.8 L5.5 14Z" fill="#d0d0d0"/></svg>
<div class="a" style="left:298.9142857142857px;top:593.4px;width:1px;height:17.2px;background:#2e2e2e;"></div>
<svg class="a" style="left:316.6857142857143px;top:593.4px;" width="17.771428571428572" height="17.2" viewBox="0 0 17.771428571428572 17.2"><path d="M5.5 4.5 V13" stroke="#c8c8c8" stroke-width="1.3"/><path d="M7.5 4.5 L14 8.8 L7.5 13Z" fill="#c8c8c8"/></svg>
<div class="a" style="left:316.6857142857143px;top:593.4px;width:1px;height:17.2px;background:#2e2e2e;"></div>
<svg class="a" style="left:334.45714285714286px;top:593.4px;" width="17.771428571428572" height="17.2" viewBox="0 0 17.771428571428572 17.2"><path d="M3.5 4.5 L10 8.8 L3.5 13Z" fill="#c8c8c8"/><rect x="11.3" y="7.2" width="3.2" height="3.2" transform="rotate(45 12.9 8.8)" fill="none" stroke="#c8c8c8" stroke-width="0.9"/></svg>
<div class="a" style="left:334.45714285714286px;top:593.4px;width:1px;height:17.2px;background:#2e2e2e;"></div>
<svg class="a" style="left:352.2285714285714px;top:593.4px;" width="17.771428571428572" height="17.2" viewBox="0 0 17.771428571428572 17.2"><path d="M4.5 4.5 L11 8.8 L4.5 13Z" fill="#c8c8c8"/><path d="M12.5 4.5 V13" stroke="#c8c8c8" stroke-width="1.3"/></svg>
<div class="a" style="left:352.2285714285714px;top:593.4px;width:1px;height:17.2px;background:#2e2e2e;"></div>
<div class="a" style="left:377px;top:593.4px;width:53px;height:17.200000000000045px;background:#353535;border-radius:2.5px"></div>
<div class="a" style="left:377px;top:593.4px;width:35px;height:17.2px;background:#5b5ea6;border-radius:2.5px 0 0 2.5px"></div>
<div class="a" style="left:394.5px;top:593.4px;width:1px;height:17.2px;background:#4a4d90;"></div>
<svg class="a" style="left:377px;top:593.4px;" width="53" height="17.2" viewBox="0 0 53 17.2"><path d="M4.5 8 V6 H12.5" fill="none" stroke="#e8e8f0" stroke-width="1.2"/><path d="M11 3.8 L13.5 6 L11 8.2Z" fill="#e8e8f0"/><path d="M13 9.5 V11.5 H5" fill="none" stroke="#e8e8f0" stroke-width="1.2"/><path d="M6.5 9.3 L4 11.5 L6.5 13.7Z" fill="#e8e8f0"/><path d="M15 16 L17 16 L17 14Z" fill="#ccc"/><text x="23.5" y="8" font-size="6" fill="#e0e0f0" font-family="Liberation Sans">A</text><path d="M20.5 10.5 v2.5 M22.5 10.5 v2.5 M24.5 10.5 v2.5" stroke="#e0e0f0" stroke-width="0.9"/><rect x="26" y="10.5" width="5" height="2.5" fill="#e0e0f0"/><path d="M32.5 16 L34.5 16 L34.5 14Z" fill="#ccc"/><path d="M38.5 7 H41 L44.5 4 V13.5 L41 10.5 H38.5Z" fill="#cfcfcf"/><path d="M46 5.5 a4 4 0 0 1 0 6.5" fill="none" stroke="#cfcfcf" stroke-width="1.1"/></svg>
<div class="a" style="left:437px;top:596px;width:50px;height:11px;background:#1c1c1c;border-radius:2px"></div>
<div class="t" style="left:462px;top:597.44px;font-size:7.4px;color:#cfd8e0;transform:translateX(-50%);">0 F</div>
<div class="a" style="left:494px;top:593.4px;width:53px;height:17.200000000000045px;background:#353535;border-radius:2.5px"></div>
<svg class="a" style="left:494px;top:593.4px;" width="53" height="17.2" viewBox="0 0 53 17.2"><circle cx="9" cy="8.6" r="6" fill="#5a2e2e"/><rect x="6" y="5.6" width="6" height="6" transform="rotate(45 9 8.6)" fill="none" stroke="#8a4444" stroke-width="1"/><path d="M15.5 16 L17.5 16 L17.5 14Z" fill="#bbb"/><circle cx="26.5" cy="8.6" r="5.8" fill="#e04b4b"/><text x="23.6" y="11.4" font-size="8" fill="#fff" font-family="Liberation Sans">A</text><circle cx="44" cy="8.6" r="5.8" fill="#d8d8d8"/><circle cx="44" cy="8.6" r="2.4" fill="none" stroke="#333" stroke-width="1.3" stroke-dasharray="1.2 0.6"/></svg>
<div class="a" style="left:512px;top:593.4px;width:1px;height:17.2px;background:#2e2e2e;"></div>
<div class="a" style="left:529.5px;top:593.4px;width:1px;height:17.2px;background:#2e2e2e;"></div>
<div class="a" style="left:553.6px;top:593.4px;width:35.39999999999998px;height:17.200000000000045px;background:#353535;border-radius:2.5px"></div>
<div class="a" style="left:571.3px;top:593.4px;width:1px;height:17.2px;background:#2e2e2e;"></div>
<svg class="a" style="left:553.6px;top:593.4px;" width="35.4" height="17.2" viewBox="0 0 35.4 17.2"><circle cx="9" cy="8.6" r="5.8" fill="#d8d8d8"/><rect x="7" y="4.8" width="4" height="7.5" rx="2" fill="#333"/><path d="M9 5 V7.5" stroke="#d8d8d8" stroke-width="0.6"/><path d="M22 11.5 A5.5 5.5 0 0 1 30 4.5" fill="none" stroke="#c8c8c8" stroke-width="1"/><path d="M31.5 6.5 A5.5 5.5 0 0 1 24 13.5" fill="none" stroke="#c8c8c8" stroke-width="1"/><circle cx="26.7" cy="9" r="1.6" fill="none" stroke="#c8c8c8" stroke-width="0.8"/><path d="M28 7.5 L31 4" stroke="#c8c8c8" stroke-width="0.9"/></svg>
<div class="a" style="left:595.6px;top:593.4px;width:88.39999999999998px;height:17.200000000000045px;background:#353535;border-radius:2.5px"></div>
<div class="a" style="left:613.28px;top:593.4px;width:1px;height:17.2px;background:#2e2e2e;"></div>
<div class="a" style="left:630.96px;top:593.4px;width:1px;height:17.2px;background:#2e2e2e;"></div>
<div class="a" style="left:648.64px;top:593.4px;width:1px;height:17.2px;background:#2e2e2e;"></div>
<div class="a" style="left:666.32px;top:593.4px;width:1px;height:17.2px;background:#2e2e2e;"></div>
<div class="a" style="left:666.32px;top:593.4px;width:17.679999999999996px;height:17.2px;background:#5b5ea6;border-radius:0 2.5px 2.5px 0"></div>
<svg class="a" style="left:595.6px;top:593.4px;" width="88.4" height="17.2" viewBox="0 0 88.4 17.2"><rect x="6.8" y="6.5" width="4" height="4" transform="rotate(45 8.8 8.5)" fill="none" stroke="#c8c8c8" stroke-width="0.9"/><path d="M8.8 2.5 L7.5 4 H10Z M8.8 14.5 L7.5 13 H10Z M2.8 8.5 L4.3 7.2 V9.8Z M14.8 8.5 L13.3 7.2 V9.8Z" fill="#c8c8c8"/><path d="M21.5 11 A5.5 5.5 0 0 1 29 3.5" fill="none" stroke="#c8c8c8" stroke-width="1"/><path d="M32 6 A5.5 5.5 0 0 1 24.5 13.8" fill="none" stroke="#c8c8c8" stroke-width="1"/><rect x="24.8" y="6.6" width="3.6" height="3.6" transform="rotate(45 26.6 8.4)" fill="none" stroke="#c8c8c8" stroke-width="0.9"/><path d="M20.5 10 L21.5 13 L23.5 11Z M32.8 7 L31.5 4 L29.8 6Z" fill="#c8c8c8"/><path d="M39 4.5 H49 V14 H44" fill="none" stroke="#c8c8c8" stroke-width="1"/><rect x="38.8" y="9" width="3.6" height="3.6" transform="rotate(45 40.6 10.8)" fill="none" stroke="#c8c8c8" stroke-width="0.9"/><path d="M43.5 8.5 L46 8.5 L46 11" fill="none" stroke="#c8c8c8" stroke-width="0.8"/><rect x="55.5" y="4.2" width="11.5" height="3.8" rx="1.9" fill="#d8d8d8"/><rect x="55.5" y="9.6" width="11.5" height="3.8" rx="1.9" fill="#d8d8d8"/><circle cx="64.8" cy="6.1" r="1" fill="#333"/><circle cx="64.8" cy="11.5" r="1" fill="#333"/><path d="M75 3.5 L84 13" stroke="#e8e8f0" stroke-width="1.2"/><circle cx="76.5" cy="12" r="2" fill="#e8e8f0"/><circle cx="81.5" cy="6" r="1.6" fill="#e8e8f0"/><path d="M79 10.5 L84 14" stroke="#e8e8f0" stroke-width="0.8" stroke-dasharray="1 0.8"/></svg>
<div class="a" style="left:882.4px;top:593.4px;width:17.600000000000023px;height:17.200000000000045px;background:#353535;border-radius:2.5px"></div>
<svg class="a" style="left:882.4px;top:593.4px;" width="17.6" height="17.2" viewBox="0 0 17.6 17.2"><path d="M5 3.5 V13.5 H15" fill="none" stroke="#c8c8c8" stroke-width="1.1"/><path d="M5 13.5 L13 5.5" stroke="#c8c8c8" stroke-width="1.1"/><path d="M3.5 5 L5 2.5 L6.5 5Z M13.5 12 L16 13.5 L13.5 15Z M10.5 5 L13.5 4.5 L13 7.5Z" fill="#c8c8c8"/></svg>
<div class="t" style="left:39.3px;top:611.67px;font-size:7.6px;color:#8aa0d8;transform:translateX(-50%);">0</div>
<div class="t" style="left:81.3px;top:611.67px;font-size:7.6px;color:#b8b8b8;transform:translateX(-50%);">5</div>
<div class="t" style="left:129.3px;top:611.67px;font-size:7.6px;color:#b8b8b8;transform:translateX(-50%);">10</div>
<div class="t" style="left:177.3px;top:611.67px;font-size:7.6px;color:#b8b8b8;transform:translateX(-50%);">15</div>
<div class="t" style="left:225.3px;top:611.67px;font-size:7.6px;color:#b8b8b8;transform:translateX(-50%);">20</div>
<div class="t" style="left:273.3px;top:611.67px;font-size:7.6px;color:#b8b8b8;transform:translateX(-50%);">25</div>
<div class="t" style="left:321.3px;top:611.67px;font-size:7.6px;color:#b8b8b8;transform:translateX(-50%);">30</div>
<div class="t" style="left:369.3px;top:611.67px;font-size:7.6px;color:#b8b8b8;transform:translateX(-50%);">35</div>
<div class="t" style="left:417.3px;top:611.67px;font-size:7.6px;color:#b8b8b8;transform:translateX(-50%);">40</div>
<div class="t" style="left:465.3px;top:611.67px;font-size:7.6px;color:#b8b8b8;transform:translateX(-50%);">45</div>
<div class="t" style="left:513.3px;top:611.67px;font-size:7.6px;color:#b8b8b8;transform:translateX(-50%);">50</div>
<div class="t" style="left:561.3px;top:611.67px;font-size:7.6px;color:#b8b8b8;transform:translateX(-50%);">55</div>
<div class="t" style="left:609.3px;top:611.67px;font-size:7.6px;color:#b8b8b8;transform:translateX(-50%);">60</div>
<div class="t" style="left:657.3px;top:611.67px;font-size:7.6px;color:#b8b8b8;transform:translateX(-50%);">65</div>
<div class="t" style="left:705.3px;top:611.67px;font-size:7.6px;color:#b8b8b8;transform:translateX(-50%);">70</div>
<div class="t" style="left:753.3px;top:611.67px;font-size:7.6px;color:#b8b8b8;transform:translateX(-50%);">75</div>
<div class="t" style="left:801.3px;top:611.67px;font-size:7.6px;color:#b8b8b8;transform:translateX(-50%);">80</div>
<div class="t" style="left:849.3px;top:611.67px;font-size:7.6px;color:#b8b8b8;transform:translateX(-50%);">85</div>
<div class="t" style="left:897.3px;top:611.67px;font-size:7.6px;color:#b8b8b8;transform:translateX(-50%);">90</div>
<div class="a" style="left:32.8px;top:623.5px;width:1px;height:2.2px;background:#8a8a8a;"></div>
<div class="a" style="left:42.4px;top:624.3px;width:1px;height:1px;background:#777;"></div>
<div class="a" style="left:52.0px;top:624.3px;width:1px;height:1px;background:#777;"></div>
<div class="a" style="left:61.599999999999994px;top:624.3px;width:1px;height:1px;background:#777;"></div>
<div class="a" style="left:71.19999999999999px;top:624.3px;width:1px;height:1px;background:#777;"></div>
<div class="a" style="left:80.8px;top:623.5px;width:1px;height:2.2px;background:#8a8a8a;"></div>
<div class="a" style="left:90.39999999999999px;top:624.3px;width:1px;height:1px;background:#777;"></div>
<div class="a" style="left:100.0px;top:624.3px;width:1px;height:1px;background:#777;"></div>
<div class="a" style="left:109.6px;top:624.3px;width:1px;height:1px;background:#777;"></div>
<div class="a" style="left:119.19999999999999px;top:624.3px;width:1px;height:1px;background:#777;"></div>
<div class="a" style="left:128.8px;top:623.5px;width:1px;height:2.2px;background:#8a8a8a;"></div>
<div class="a" style="left:138.39999999999998px;top:624.3px;width:1px;height:1px;background:#777;"></div>
<div class="a" style="left:148.0px;top:624.3px;width:1px;height:1px;background:#777;"></div>
<div class="a" style="left:157.6px;top:624.3px;width:1px;height:1px;background:#777;"></div>
<div class="a" style="left:167.2px;top:624.3px;width:1px;height:1px;background:#777;"></div>
<div class="a" style="left:176.8px;top:623.5px;width:1px;height:2.2px;background:#8a8a8a;"></div>
<div class="a" style="left:186.39999999999998px;top:624.3px;width:1px;height:1px;background:#777;"></div>
<div class="a" style="left:196.0px;top:624.3px;width:1px;height:1px;background:#777;"></div>
<div class="a" style="left:205.59999999999997px;top:624.3px;width:1px;height:1px;background:#777;"></div>
<div class="a" style="left:215.2px;top:624.3px;width:1px;height:1px;background:#777;"></div>
<div class="a" style="left:224.8px;top:623.5px;width:1px;height:2.2px;background:#8a8a8a;"></div>
<div class="a" style="left:234.39999999999998px;top:624.3px;width:1px;height:1px;background:#777;"></div>
<div class="a" style="left:244.0px;top:624.3px;width:1px;height:1px;background:#777;"></div>
<div class="a" style="left:253.59999999999997px;top:624.3px;width:1px;height:1px;background:#777;"></div>
<div class="a" style="left:263.2px;top:624.3px;width:1px;height:1px;background:#777;"></div>
<div class="a" style="left:272.8px;top:623.5px;width:1px;height:2.2px;background:#8a8a8a;"></div>
<div class="a" style="left:282.4px;top:624.3px;width:1px;height:1px;background:#777;"></div>
<div class="a" style="left:292.0px;top:624.3px;width:1px;height:1px;background:#777;"></div>
<div class="a" style="left:301.6px;top:624.3px;width:1px;height:1px;background:#777;"></div>
<div class="a" style="left:311.2px;top:624.3px;width:1px;height:1px;background:#777;"></div>
<div class="a" style="left:320.8px;top:623.5px;width:1px;height:2.2px;background:#8a8a8a;"></div>
<div class="a" style="left:330.4px;top:624.3px;width:1px;height:1px;background:#777;"></div>
<div class="a" style="left:340.0px;top:624.3px;width:1px;height:1px;background:#777;"></div>
<div class="a" style="left:349.6px;top:624.3px;width:1px;height:1px;background:#777;"></div>
<div class="a" style="left:359.2px;top:624.3px;width:1px;height:1px;background:#777;"></div>
<div class="a" style="left:368.8px;top:623.5px;width:1px;height:2.2px;background:#8a8a8a;"></div>
<div class="a" style="left:378.4px;top:624.3px;width:1px;height:1px;background:#777;"></div>
<div class="a" style="left:388.0px;top:624.3px;width:1px;height:1px;background:#777;"></div>
<div class="a" style="left:397.6px;top:624.3px;width:1px;height:1px;background:#777;"></div>
<div class="a" style="left:407.2px;top:624.3px;width:1px;height:1px;background:#777;"></div>
<div class="a" style="left:416.8px;top:623.5px;width:1px;height:2.2px;background:#8a8a8a;"></div>
<div class="a" style="left:426.4px;top:624.3px;width:1px;height:1px;background:#777;"></div>
<div class="a" style="left:436.0px;top:624.3px;width:1px;height:1px;background:#777;"></div>
<div class="a" style="left:445.6px;top:624.3px;width:1px;height:1px;background:#777;"></div>
<div class="a" style="left:455.2px;top:624.3px;width:1px;height:1px;background:#777;"></div>
<div class="a" style="left:464.8px;top:623.5px;width:1px;height:2.2px;background:#8a8a8a;"></div>
<div class="a" style="left:474.4px;top:624.3px;width:1px;height:1px;background:#777;"></div>
<div class="a" style="left:484.0px;top:624.3px;width:1px;height:1px;background:#777;"></div>
<div class="a" style="left:493.59999999999997px;top:624.3px;width:1px;height:1px;background:#777;"></div>
<div class="a" style="left:503.2px;top:624.3px;width:1px;height:1px;background:#777;"></div>
<div class="a" style="left:512.8px;top:623.5px;width:1px;height:2.2px;background:#8a8a8a;"></div>
<div class="a" style="left:522.4px;top:624.3px;width:1px;height:1px;background:#777;"></div>
<div class="a" style="left:532.0px;top:624.3px;width:1px;height:1px;background:#777;"></div>
<div class="a" style="left:541.5999999999999px;top:624.3px;width:1px;height:1px;background:#777;"></div>
<div class="a" style="left:551.1999999999999px;top:624.3px;width:1px;height:1px;background:#777;"></div>
<div class="a" style="left:560.8px;top:623.5px;width:1px;height:2.2px;background:#8a8a8a;"></div>
<div class="a" style="left:570.4px;top:624.3px;width:1px;height:1px;background:#777;"></div>
<div class="a" style="left:579.9999999999999px;top:624.3px;width:1px;height:1px;background:#777;"></div>
<div class="a" style="left:589.5999999999999px;top:624.3px;width:1px;height:1px;background:#777;"></div>
<div class="a" style="left:599.1999999999999px;top:624.3px;width:1px;height:1px;background:#777;"></div>
<div class="a" style="left:608.8px;top:623.5px;width:1px;height:2.2px;background:#8a8a8a;"></div>
<div class="a" style="left:618.4px;top:624.3px;width:1px;height:1px;background:#777;"></div>
<div class="a" style="left:627.9999999999999px;top:624.3px;width:1px;height:1px;background:#777;"></div>
<div class="a" style="left:637.5999999999999px;top:624.3px;width:1px;height:1px;background:#777;"></div>
<div class="a" style="left:647.1999999999999px;top:624.3px;width:1px;height:1px;background:#777;"></div>
<div class="a" style="left:656.8px;top:623.5px;width:1px;height:2.2px;background:#8a8a8a;"></div>
<div class="a" style="left:666.4px;top:624.3px;width:1px;height:1px;background:#777;"></div>
<div class="a" style="left:675.9999999999999px;top:624.3px;width:1px;height:1px;background:#777;"></div>
<div class="a" style="left:685.5999999999999px;top:624.3px;width:1px;height:1px;background:#777;"></div>
<div class="a" style="left:695.1999999999999px;top:624.3px;width:1px;height:1px;background:#777;"></div>
<div class="a" style="left:704.8px;top:623.5px;width:1px;height:2.2px;background:#8a8a8a;"></div>
<div class="a" style="left:714.4px;top:624.3px;width:1px;height:1px;background:#777;"></div>
<div class="a" style="left:723.9999999999999px;top:624.3px;width:1px;height:1px;background:#777;"></div>
<div class="a" style="left:733.5999999999999px;top:624.3px;width:1px;height:1px;background:#777;"></div>
<div class="a" style="left:743.1999999999999px;top:624.3px;width:1px;height:1px;background:#777;"></div>
<div class="a" style="left:752.8px;top:623.5px;width:1px;height:2.2px;background:#8a8a8a;"></div>
<div class="a" style="left:762.4px;top:624.3px;width:1px;height:1px;background:#777;"></div>
<div class="a" style="left:771.9999999999999px;top:624.3px;width:1px;height:1px;background:#777;"></div>
<div class="a" style="left:781.5999999999999px;top:624.3px;width:1px;height:1px;background:#777;"></div>
<div class="a" style="left:791.1999999999999px;top:624.3px;width:1px;height:1px;background:#777;"></div>
<div class="a" style="left:800.8px;top:623.5px;width:1px;height:2.2px;background:#8a8a8a;"></div>
<div class="a" style="left:810.4px;top:624.3px;width:1px;height:1px;background:#777;"></div>
<div class="a" style="left:819.9999999999999px;top:624.3px;width:1px;height:1px;background:#777;"></div>
<div class="a" style="left:829.5999999999999px;top:624.3px;width:1px;height:1px;background:#777;"></div>
<div class="a" style="left:839.1999999999999px;top:624.3px;width:1px;height:1px;background:#777;"></div>
<div class="a" style="left:848.8px;top:623.5px;width:1px;height:2.2px;background:#8a8a8a;"></div>
<div class="a" style="left:858.4px;top:624.3px;width:1px;height:1px;background:#777;"></div>
<div class="a" style="left:867.9999999999999px;top:624.3px;width:1px;height:1px;background:#777;"></div>
<div class="a" style="left:877.5999999999999px;top:624.3px;width:1px;height:1px;background:#777;"></div>
<div class="a" style="left:887.1999999999999px;top:624.3px;width:1px;height:1px;background:#777;"></div>
<div class="a" style="left:896.8px;top:623.5px;width:1px;height:2.2px;background:#8a8a8a;"></div>
<div class="a" style="left:31px;top:611.6px;width:5.6px;height:10px;background:#6a6dc0;"></div>
<div class="a" style="left:33.3px;top:621.6px;width:1px;height:3px;background:#999;"></div>
<div class="a" style="left:320.5px;top:612.5px;width:1px;height:12.5px;background:#aaa;"></div>
<div class="a" style="left:609px;top:612.5px;width:1px;height:12.5px;background:#aaa;"></div>
<div class="a" style="left:897.8px;top:613px;width:1.2px;height:13px;background:#8a8a8a;"></div>
<div class="a" style="left:842.5px;top:630px;width:0.8px;height:7px;background:#555;"></div>
<div class="a" style="left:844.8px;top:630px;width:0.8px;height:7px;background:#555;"></div>
<div class="a" style="left:30px;top:628px;width:49px;height:10.6px;background:#1c1c1c;border-radius:2px"></div>
<div class="t" style="left:54.5px;top:629.24px;font-size:7.4px;color:#cfd8e0;transform:translateX(-50%);">0 F</div>
<div class="a" style="left:85px;top:628px;width:763px;height:10.6px;background:#3a3a3a;border-radius:2px"></div>
<div class="a" style="left:87px;top:629px;width:2px;height:8.6px;background:#333;"></div>
<div class="t" style="left:94px;top:629.24px;font-size:7.4px;color:#d0d0d0;">0 F</div>
<div class="t" style="right:363px;top:629.24px;font-size:7.4px;color:#d0d0d0;">90 F</div>
<div class="a" style="left:853px;top:628px;width:48.6px;height:10.6px;background:#1c1c1c;border-radius:2px"></div>
<div class="t" style="left:877.5px;top:629.24px;font-size:7.4px;color:#e0e0e0;transform:translateX(-50%);">90 F</div>
<div class="a" style="left:1px;top:640px;width:1199px;height:11px;background:#1c1c1c;"></div>
<svg class="a" style="left:4px;top:645px;" width="10" height="6" viewBox="0 0 10 6"><path d="M0.5 0.8 H9 M0.5 3.3 H9 M0.5 5.8 H9" stroke="#888" stroke-width="1"/></svg>
<svg class="a" style="left:18px;top:644px;" width="12" height="8" viewBox="0 0 12 8"><circle cx="5.5" cy="6" r="4.5" fill="none" stroke="#888" stroke-width="0.9"/><path d="M3 6 L5 7.5 L10 2" fill="none" stroke="#888" stroke-width="0.9"/></svg>
<div class="a" style="left:0px;top:651px;width:1200px;height:6px;background:#d8e7f3;"></div>
<div class="a" style="left:142px;top:655px;width:6px;height:2px;background:#555;border-radius:2px 2px 0 0"></div>
<div class="a" style="left:155px;top:655px;width:23px;height:2px;background:#f6f9fc;"></div>
</body></html>
